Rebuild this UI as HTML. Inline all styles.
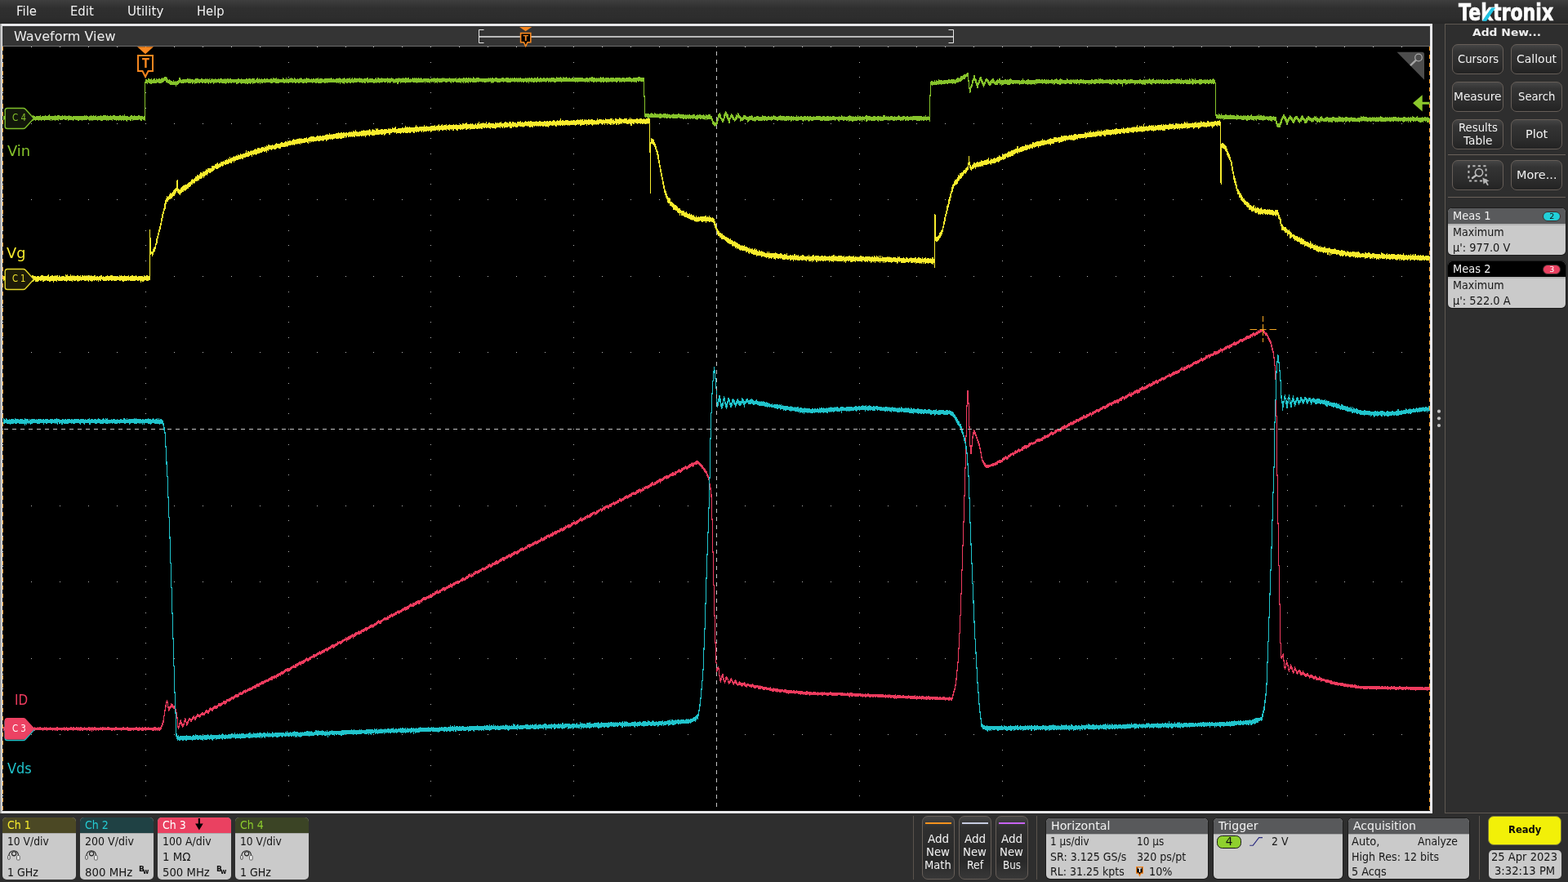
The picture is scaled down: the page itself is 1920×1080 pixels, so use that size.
<!DOCTYPE html>
<html lang="en"><head><meta charset="utf-8"><title>Waveform View</title>
<style>
html,body{margin:0;padding:0;}
body{width:1920px;height:1080px;overflow:hidden;background:#2e2e2e;position:relative;font-family:"DejaVu Sans","Liberation Sans",sans-serif;}
div,span.t,svg{position:absolute;box-sizing:border-box;}
span.t{white-space:nowrap;line-height:1;transform-origin:0 50%;}
.btn{border:1px solid #665e58;border-radius:7px;background:linear-gradient(#454545 0%,#343434 22%,#2b2b2b 72%,#232323 100%);}
.btn2{border:1px solid #665e58;border-radius:7px;background:linear-gradient(#434343 0%,#2f2f2f 18%,#292929 72%,#383838 100%);}
.badge{border-radius:5px;background:#cacaca;overflow:hidden;box-shadow:0 0 0 1px #1c1c1c;}
.hd{left:0;top:0;width:100%;border-bottom:2px solid #b3b3b3;box-sizing:content-box;}
</style></head><body>
<div id="app" style="left:0;top:0;width:1920px;height:1080px;will-change:transform;">

<div style="left:0px;top:0px;width:1920px;height:29px;background:linear-gradient(#3e3e3e 0px,#3a3a3a 3px,#2f2f2f 10px,#2d2d2d 22px,#262626 29px);"></div>
<span class="t" style="left:20.40px;top:7px;font-size:15px;color:#f2f2f2;transform:scaleX(0.9950);">File</span>
<span class="t" style="left:86.30px;top:7px;font-size:15px;color:#f2f2f2;transform:scaleX(0.9888);">Edit</span>
<span class="t" style="left:155.70px;top:7px;font-size:15px;color:#f2f2f2;transform:scaleX(1.0045);">Utility</span>
<span class="t" style="left:241.00px;top:7px;font-size:15px;color:#f2f2f2;transform:scaleX(0.9825);">Help</span>
<div id="logo" style="left:1784px;top:0;width:124px;height:29px;">
<span class="t" style="left:2.10px;top:2px;font-size:28px;color:#ffffff;transform:scaleX(0.7905);font-weight:bold;-webkit-text-stroke:0.7px #fff;">Tektronix</span>
<svg style="left:0;top:0" width="124" height="29"><polygon points="31,25.8 36.2,25.8 47.2,9.4 42.2,9.4" fill="#1fc3e3"/></svg>
</div>
<div style="left:0px;top:29px;width:1754px;height:967px;background:#e7e7e9;"></div>
<div style="left:0px;top:29px;width:2px;height:967px;background:linear-gradient(90deg,#8f8f8f,#cfcfcf);"></div>
<div style="left:3px;top:32px;width:1748px;height:961px;background:#000;"></div>
<div style="left:3px;top:32px;width:1748px;height:25px;background:#343434;border-bottom:1px solid #6d6d6d;"></div>
<span class="t" style="left:16.50px;top:37px;font-size:16px;color:#ececec;transform:scaleX(1.0021);">Waveform View</span>
<svg id="plot" style="left:3px;top:57px" width="1748" height="936" viewBox="3 57 1748 936" shape-rendering="crispEdges">
<rect x="3" y="57" width="1748" height="936" fill="#000"/>
<path d="M4 142h12v-1h1v1h5v-1h4v2h1v-1h3v-1h1v1h6v-1h1v1h2v-1h1v1h2v1h1v-1h5v-1h1v2h1v-1h4v-1h1v1h3v-1h1v-1h1v2h6v-1h1v1h2v-1h3v1h3v-1h1v1h2v-1h1v1h4v-1h1v1h3v1h1v-1h14v-1h1v1h1v-1h1v1h2v1h1v-1h2v-1h1v1h2v-1h1v1h2v-1h1v2h1v-1h4v-1h1v1h2v-1h4v1h1v-1h1v1h3v-1h1v1h2v-1h3v1h5v-1h2v1h2v-1h1v1h1v-2h1v2h4v1h2v-1h1v-1h2v1h2v-1h1v1h4v-1h2v1h4v1h1v-1h1v-42h1v-3h2v1h1v-2h2v1h2v-1h1v2h1v-1h1v-1h2v2h1v-2h1v1h2v-1h2v1h1v-1h1v-1h1v1h1v-1h1v-1h3v1h1v2h1v1h1v-1h1v1h1v1h2v1h1v-2h1v2h1v-1h1v1h1v-1h2v-1h1v-3h2v2h1v1h1v-1h6v-1h2v1h1v-1h1v1h4v1h1v-1h1v-1h4v1h3v-1h2v1h3v-1h1v1h1v-1h1v1h2v-1h1v2h1v-2h1v1h1v-1h1v1h2v-1h1v1h3v-1h1v1h1v-1h3v1h2v-1h1v1h1v-1h1v1h1v-1h2v1h1v-1h2v1h8v-1h2v1h2v-1h1v1h5v-1h2v1h1v-1h3v1h1v-1h4v2h1v-1h1v-1h1v-1h1v2h1v-1h1v1h2v-1h1v1h2v-1h2v1h1v-1h2v1h3v-1h2v1h1v-2h1v1h3v-1h1v2h1v-1h1v1h5v-2h1v1h1v1h2v-2h1v2h1v-1h1v1h1v-1h2v-1h1v1h2v1h1v-2h1v1h1v1h2v-1h1v1h1v-1h2v-1h1v1h1v1h2v-1h1v1h1v-1h1v-1h1v1h3v1h2v-1h1v1h1v-1h2v1h1v-1h3v-1h1v2h1v-1h4v1h2v-1h8v-1h1v1h1v1h1v-1h1v1h2v-1h4v-1h1v1h2v1h1v-1h2v-1h1v1h1v1h1v-1h4v-1h1v2h1v-1h1v-1h1v2h1v-1h1v-1h1v1h5v-1h1v1h3v1h1v-1h4v-1h2v2h1v-1h5v1h2v-1h1v-1h1v2h1v-2h2v1h3v-1h1v1h6v-1h1v1h4v-1h1v1h2v1h2v-1h4v-1h1v1h4v-1h1v1h2v-1h2v1h1v-1h2v2h1v-1h1v1h1v-1h1v-1h1v1h1v-1h1v1h1v-1h1v1h2v-1h1v1h2v-1h1v1h1v1h1v-1h8v1h1v-1h4v-1h1v1h3v-1h1v1h5v-1h1v1h1v-1h1v1h6v-1h1v1h7v-1h1v2h1v-1h2v-1h1v1h4v-1h2v1h1v-1h2v1h1v-1h2v1h1v-1h1v1h2v-2h1v1h1v1h2v-1h4v1h11v-1h1v1h1v-1h1v1h1v-1h2v1h2v-1h3v1h5v-1h3v1h2v-1h4v1h2v-1h1v1h1v-1h1v1h1v-1h2v1h1v-1h1v1h1v-1h1v1h1v-1h2v1h5v-1h1v1h1v-1h1v1h1v-1h2v1h1v-1h2v1h2v-1h2v1h1v-1h1v-1h1v2h2v-1h2v1h2v-1h2v1h2v-1h2v1h1v-1h1v1h1v-1h5v1h2v-2h1v1h4v-1h1v1h1v1h1v-2h1v1h3v-1h1v1h1v1h1v-1h2v1h2v-1h2v1h1v-1h11v1h3v-1h3v1h1v-1h3v-1h2v1h3v1h1v-1h1v1h1v-1h1v1h1v-1h1v-1h1v1h2v-1h1v1h1v1h1v-1h5v1h1v-1h5v1h1v-1h7v1h1v-1h4v1h1v-1h4v-1h1v1h2v1h2v-1h6v-1h3v1h5v22h1v22h5v1h1v-1h1v-1h1v1h2v1h1v-2h1v1h2v1h1v-1h1v1h1v-1h3v1h2v-1h4v1h1v-1h1v1h3v1h1v-1h2v-1h1v1h5v-1h2v1h6v1h1v-1h1v1h1v-1h1v1h1v-1h2v1h3v-1h3v2h1v-1h2v-1h1v1h1v-1h2v1h3v-1h1v1h1v1h1v-2h1v1h2v-1h3v2h2v3h1v3h1v1h1v1h2v-3h1v-3h1v-4h1v-1h1v-1h1v2h1v4h1v1h2v-5h1v-2h1v-2h1v1h1v2h1v1h1v4h2v-3h1v-2h1v1h1v1h1v2h1v2h1v-2h1v-3h1v1h1v-3h1v1h1v2h1v1h1v1h1v1h1v-1h1v-2h3v1h1v1h3v-1h3v-1h1v1h1v2h1v-1h3v-1h3v1h4v-2h1v1h4v1h2v-1h2v1h2v-1h1v1h1v-1h1v-1h1v1h2v1h3v-1h2v-1h1v1h5v1h1v-1h5v1h1v-1h2v1h1v-1h1v1h3v-2h1v2h1v-1h1v1h2v-1h2v1h2v-1h3v1h1v-1h2v1h1v-1h2v1h3v-1h1v1h2v-1h6v1h2v-1h3v1h2v-1h3v1h1v-1h1v1h2v-1h3v1h5v-1h1v1h2v-2h1v1h1v1h1v-1h1v1h4v-1h2v-1h1v1h2v1h1v-1h1v1h2v-1h1v1h2v-2h1v2h1v-1h2v1h2v-1h1v1h2v-1h1v-1h2v1h4v1h3v-1h3v1h2v-1h3v1h1v-1h1v1h2v-2h3v2h1v-1h1v1h1v-1h1v1h2v-1h3v1h2v-1h1v1h3v-1h1v-1h1v1h1v1h3v-1h3v1h2v-1h2v1h3v-1h1v1h1v-1h12v1h2v-1h1v1h1v-2h1v2h2v-1h1v1h1v-27h1v-16h1v-1h2v1h2v-2h1v2h1v-2h1v1h2v-2h1v1h4v1h1v-1h6v-1h2v1h1v-1h5v1h1v-1h1v-1h1v-1h2v1h1v-1h1v-2h3v-1h1v-1h3v-1h1v-1h2v9h1v9h1v-2h1v-2h1v-5h1v-2h1v-4h2v4h1v1h1v4h2v-3h1v-3h1v-1h2v3h1v2h1v2h1v-1h1v-3h1v-1h2v1h1v1h1v2h1v-1h1v-1h1v-1h1v-1h2v2h1v2h1v-1h1v-1h1v-1h1v1h1v-2h2v2h5v-1h2v1h1v-1h1v1h1v-1h2v-1h1v1h1v1h10v1h1v-1h2v-2h1v2h2v1h1v-1h2v-1h2v1h8v-1h6v1h1v-1h2v1h1v-1h2v1h1v-1h1v1h1v-1h1v1h3v-1h2v1h2v-1h2v-1h1v1h1v1h2v-1h1v-1h1v1h2v1h5v-2h1v1h1v1h2v-1h1v1h1v-1h1v1h1v-1h1v1h1v-1h1v1h1v-1h2v1h2v-1h3v1h1v-1h1v1h9v-1h2v1h2v-1h4v1h1v-2h1v1h1v-1h1v1h3v1h3v-1h1v1h1v-1h1v1h1v-1h2v1h2v-1h2v1h4v-1h3v1h1v-1h1v1h2v-1h4v1h2v-1h1v1h1v-1h4v1h8v-1h2v1h3v-1h1v1h1v-1h1v1h1v-1h1v1h1v-1h1v-1h1v1h1v1h1v-1h2v-1h1v2h3v-1h1v1h1v-1h1v1h1v-1h1v1h2v-1h2v1h4v-1h1v1h3v-1h4v1h2v-1h2v-1h1v1h3v1h1v-2h1v2h4v-1h1v1h1v-1h1v1h2v-2h1v1h1v2h1v-3h1v1h2v1h1v-2h1v2h4v-1h4v1h2v-1h1v1h1v-1h1v1h1v-1h1v1h2v-1h2v1h1v-1h1v-1h1v1h1v1h1v3h1v39h2v1h1v-2h1v1h1v1h1v-2h1v2h4v-1h2v1h4v-1h1v1h5v1h2v-2h1v1h2v1h2v-1h1v1h2v-1h1v1h1v-1h1v1h2v-1h2v1h2v-1h1v-1h1v2h6v-1h1v1h1v-2h1v2h1v-1h2v1h2v-1h1v1h1v1h1v-1h1v1h1v-1h1v1h1v-1h3v1h2v-1h1v1h3v5h1v3h3v-2h1v-3h1v-2h1v-2h1v-2h2v2h1v1h1v2h1v1h1v-2h1v-1h1v-2h1v1h1v1h1v1h1v2h1v-2h1v-1h1v-1h3v2h1v1h1v1h1v-2h1v-2h1v-1h1v1h1v2h1v1h1v1h1v-2h2v-2h2v1h1v1h2v1h1v-1h2v-2h1v1h1v-1h1v2h2v1h2v-2h2v-1h1v2h1v1h2v-1h2v-1h2v1h5v-1h3v1h5v-2h1v1h2v1h1v-1h1v1h3v-1h3v1h4v-1h1v1h5v1h2v-1h4v-2h1v1h2v-1h1v1h4v1h3v-1h1v1h2v-1h1v1h1v-1h1v1h2v-1h1v1h1v-1h1v1h1v-1h1v-1h1v1h2v1h3v-1h1v1h1v-1h1v1h2v-1h1v1h1v-1h1v1h1v-1h5v1h2v-1h1v1h5v-1h3v1h3v-1h1v1h2v-1h1v1h1v-2h1v1h2v1h2v-1h1v-1h1v2h5v-1h1v1h2v-1h2v1h1v-1h1v1h2v1h1v4h-1v1h-3v-2h-1v1h-1v-1h-2v2h-1v-1h-1v1h-3v-1h-2v-1h-2v1h-1v-1h-1v1h-2v-1h-2v2h-1v-1h-1v-1h-1v2h-1v-2h-1v1h-1v-1h-1v1h-2v1h-1v-1h-1v-1h-2v1h-1v-1h-1v1h-2v-1h-1v1h-1v-1h-2v1h-2v-1h-1v1h-3v-1h-1v1h-1v-1h-1v1h-8v-1h-1v1h-6v-1h-1v1h-1v-1h-1v1h-3v-1h-1v1h-3v-1h-1v1h-1v-1h-3v1h-1v-1h-1v1h-1v1h-1v-1h-9v-1h-1v1h-1v1h-1v-1h-1v-1h-1v1h-2v1h-1v-2h-1v1h-1v1h-1v-1h-6v1h-1v-1h-1v1h-1v-1h-1v-1h-2v2h-2v-1h-1v1h-1v-1h-1v1h-1v-2h-1v1h-5v-1h-1v1h-1v-1h-1v2h-2v-1h-1v1h-2v-2h-2v-1h-1v2h-2v1h-1v-1h-1v-1h-2v-1h-1v1h-1v2h-1v1h-3v-3h-1v-1h-2v2h-2v2h-1v-1h-1v-1h-1v-2h-1v-1h-1v1h-1v2h-1v2h-2v-1h-1v-2h-1v-1h-1v-1h-1v2h-1v2h-1v3h-2v-3h-1v-2h-1v-2h-1v-1h-1v2h-1v4h-1v2h-1v3h-4v-1h-1v-3h-1v-4h-2v-1h-2v2h-1v-1h-2v-1h-1v1h-1v-1h-2v-1h-1v1h-3v1h-1v-1h-5v-1h-2v2h-1v-1h-1v-1h-1v2h-1v-1h-3v-1h-1v1h-3v1h-2v-1h-1v-1h-1v1h-4v-1h-5v1h-1v-1h-15v1h-1v-2h-1v1h-1v-1h-1v1h-1v-1h-1v1h-1v-1h-3v-3h-1v-40h-1v1h-2v-1h-1v1h-1v-1h-2v1h-2v-1h-2v1h-2v-1h-3v1h-2v1h-1v-1h-1v-1h-3v1h-2v-1h-1v1h-1v1h-1v-1h-1v-1h-1v1h-6v-1h-2v1h-2v-1h-1v1h-2v-1h-2v1h-1v-1h-1v1h-1v-1h-5v1h-2v-1h-2v1h-2v-1h-1v1h-1v-1h-1v1h-2v-1h-1v1h-1v-1h-2v1h-1v-1h-3v1h-2v-1h-3v2h-1v-1h-2v-1h-2v1h-1v-1h-2v2h-2v-1h-1v1h-1v-1h-2v-1h-1v1h-1v-1h-2v1h-1v-1h-1v1h-1v1h-1v-2h-5v1h-1v-1h-2v1h-2v1h-1v-2h-3v4h-1v-3h-3v-1h-2v2h-1v-1h-2v-1h-2v1h-1v-1h-1v2h-1v-1h-3v-1h-7v1h-1v-1h-3v1h-1v-1h-4v1h-3v-1h-2v1h-2v-1h-1v2h-1v-2h-3v1h-2v-1h-1v1h-1v-1h-4v2h-1v-2h-2v1h-2v-1h-1v1h-1v-1h-1v-1h-1v2h-4v-1h-3v1h-3v-1h-1v1h-1v-1h-1v1h-1v1h-2v-1h-3v-1h-2v1h-1v1h-1v-2h-1v1h-1v-1h-4v1h-1v-1h-1v1h-2v-1h-3v1h-1v-1h-6v1h-1v-1h-1v2h-1v-1h-4v1h-1v-1h-3v1h-1v-1h-3v-1h-1v1h-5v1h-1v-1h-1v-1h-1v1h-1v-1h-1v1h-1v-1h-1v1h-3v-1h-1v1h-1v1h-4v-1h-4v1h-2v1h-1v-2h-1v1h-1v-2h-2v2h-4v-1h-1v-1h-3v2h-1v1h-2v-1h-1v-2h-1v-2h-2v3h-1v2h-1v2h-1v-2h-1v-2h-1v-2h-1v-2h-1v3h-1v2h-1v4h-2v-3h-1v-3h-1v-3h-2v3h-1v4h-1v2h-1v5h-1v1h-1v-5h-1v-9h-1v-6h-2v1h-1v2h-3v1h-1v1h-1v1h-3v1h-3v1h-1v1h-1v-1h-2v1h-1v-1h-5v1h-2v-1h-1v1h-5v1h-1v-1h-2v1h-1v-1h-1v1h-6v1h-1v-1h-1v14h-1v31h-1v-2h-3v1h-1v-1h-2v1h-2v-1h-1v1h-1v-1h-1v1h-5v-1h-4v1h-1v-1h-4v1h-2v-1h-1v1h-2v-2h-1v1h-1v1h-1v-1h-1v1h-2v-1h-4v1h-1v-1h-1v1h-3v-1h-3v1h-1v-1h-1v1h-1v-1h-5v1h-5v-1h-1v2h-1v-1h-1v-1h-2v1h-6v-1h-1v1h-1v-1h-1v1h-1v1h-2v-3h-1v2h-1v-1h-2v2h-1v-2h-1v1h-2v-1h-2v1h-5v1h-2v-1h-3v1h-1v-2h-1v1h-2v-1h-2v1h-2v-1h-4v2h-1v-1h-1v-1h-1v-1h-1v1h-1v1h-1v-1h-4v1h-1v-1h-1v1h-7v-1h-1v1h-4v-1h-8v1h-3v-1h-1v1h-1v1h-1v-1h-1v-1h-2v1h-1v-1h-1v1h-1v1h-1v-1h-1v-1h-4v1h-4v-1h-2v1h-1v-1h-1v1h-1v1h-1v-2h-2v1h-1v-1h-1v1h-4v-1h-1v1h-1v-1h-1v1h-1v-1h-3v1h-2v-1h-3v-1h-1v1h-2v1h-1v-1h-4v1h-2v-1h-1v1h-2v-1h-1v1h-6v-1h-2v1h-1v1h-1v-1h-3v-1h-3v1h-1v1h-1v1h-1v-3h-2v-1h-2v1h-1v1h-3v1h-1v-4h-2v-1h-1v2h-1v1h-1v1h-1v1h-1v-2h-2v-2h-1v-1h-1v2h-1v5h-2v-3h-1v-2h-1v-2h-1v-2h-1v3h-1v3h-1v2h-2v-2h-1v-2h-1v-1h-1v-1h-1v4h-1v4h-1v2h-2v1h-1v-1h-1v-1h-1v-1h-1v-4h-1v-2h-5v1h-1v-2h-1v2h-1v-1h-3v-1h-1v1h-2v-1h-2v1h-1v1h-1v-1h-2v-1h-2v1h-1v-1h-2v1h-1v-1h-1v1h-1v-1h-2v1h-2v-1h-1v1h-2v-1h-4v-1h-2v1h-7v-1h-1v1h-3v-1h-1v1h-3v-1h-1v1h-1v-1h-3v1h-3v-1h-12v1h-2v-1h-1v-1h-1v1h-1v-1h-1v-24h-1v-19h-4v-1h-1v1h-2v-1h-1v2h-2v-1h-1v1h-1v-1h-2v1h-1v-1h-8v1h-1v-1h-3v1h-1v-1h-1v1h-1v-2h-1v1h-1v1h-2v-1h-4v1h-1v-1h-3v1h-1v-1h-1v1h-2v-1h-2v1h-2v-1h-1v1h-2v-1h-4v1h-1v-1h-2v1h-2v-1h-3v-1h-1v2h-1v-1h-1v1h-1v-1h-2v1h-1v-1h-8v1h-1v-1h-2v1h-1v-1h-16v1h-1v-1h-6v1h-3v-1h-3v1h-1v-1h-2v1h-1v-2h-1v1h-1v1h-1v-1h-5v1h-1v-1h-1v1h-1v-1h-2v1h-2v-1h-1v1h-3v-1h-1v1h-1v-1h-2v2h-1v-2h-1v1h-2v-1h-2v1h-2v-1h-1v1h-1v-1h-2v1h-1v-1h-1v1h-1v-1h-2v1h-1v-1h-4v1h-6v-1h-3v1h-1v-1h-3v1h-5v-1h-3v1h-1v1h-1v-1h-1v1h-1v-2h-3v1h-1v-1h-1v1h-4v-1h-1v1h-1v-1h-4v1h-1v-1h-1v1h-6v-1h-1v1h-2v-1h-1v2h-1v-1h-3v1h-1v-2h-1v2h-1v-1h-1v-1h-1v2h-1v-1h-6v-1h-2v1h-2v-1h-1v2h-1v-1h-1v-1h-3v1h-3v-1h-3v1h-5v-1h-1v2h-1v-1h-2v1h-1v-2h-1v1h-1v-1h-1v1h-1v-1h-1v2h-1v-1h-4v-1h-1v2h-1v-2h-1v1h-8v1h-1v-1h-5v-1h-1v1h-7v1h-1v-1h-5v1h-1v-2h-1v1h-1v2h-2v-2h-2v1h-1v-1h-1v1h-1v-2h-2v1h-1v1h-1v-1h-2v1h-1v-2h-1v1h-3v-1h-1v1h-4v1h-1v-1h-3v1h-1v-1h-1v1h-2v-1h-6v1h-1v-1h-1v-1h-1v2h-2v-1h-2v1h-1v-1h-4v-1h-1v1h-5v1h-1v-1h-2v1h-2v-1h-2v1h-2v-1h-2v2h-1v-1h-2v-1h-2v2h-1v-2h-1v1h-1v-1h-1v1h-1v-1h-11v1h-1v-1h-1v1h-2v-1h-3v1h-5v-1h-1v1h-2v-1h-3v1h-1v-1h-6v1h-2v-1h-1v1h-3v-1h-3v1h-2v-1h-2v1h-2v-1h-2v1h-1v-1h-4v1h-2v-1h-1v1h-1v-1h-1v1h-2v-1h-5v1h-5v-1h-3v1h-3v-1h-6v1h-1v-1h-2v1h-2v-1h-1v2h-1v-2h-1v1h-2v-1h-2v1h-3v1h-1v-2h-1v1h-1v1h-1v-1h-2v1h-2v-1h-1v1h-1v-1h-4v1h-1v-1h-1v-1h-1v1h-2v1h-2v-2h-2v1h-1v-1h-2v1h-2v-1h-1v1h-2v-1h-1v1h-1v1h-1v-1h-5v-1h-1v1h-2v-1h-3v1h-1v-1h-1v1h-1v1h-1v-2h-2v1h-2v-1h-1v2h-1v-1h-1v-1h-1v1h-3v-1h-1v1h-2v-1h-2v1h-2v-1h-1v1h-3v1h-1v-2h-1v1h-1v1h-1v-2h-1v1h-4v-1h-2v1h-1v-1h-1v1h-5v-1h-1v1h-1v1h-1v1h-2v2h-1v-2h-7v-1h-1v-1h-2v-1h-2v-2h-2v1h-1v1h-2v1h-4v-1h-2v1h-6v1h-2v-1h-2v-1h-1v2h-1v-1h-2v46h-1v-1h-2v-1h-1v2h-2v-1h-1v-1h-1v1h-7v1h-1v-2h-1v2h-2v-1h-3v2h-1v-1h-1v-1h-2v1h-1v-1h-2v1h-1v-1h-2v1h-1v-1h-2v1h-1v-1h-3v-1h-1v2h-1v-1h-4v1h-1v-1h-1v1h-1v-1h-4v1h-3v-1h-3v1h-1v-1h-5v1h-1v-1h-1v1h-1v-1h-1v1h-1v-1h-1v-1h-1v1h-6v1h-1v-1h-3v1h-2v-1h-3v-1h-1v1h-1v1h-1v-1h-5v1h-1v-2h-1v1h-3v-1h-2v1h-4v-1h-1v2h-1v-1h-3v1h-1v-1h-3v1h-1v-2h-1v2h-1v-1h-6v1h-1v-1h-3v1h-1v-1h-2v1h-1v-1h-3v1h-1v-1h-2v1h-1v-1h-5v-1h-2v1h-1v-1h-1v1h-1v1h-1v-1h-6v1h-1v1h-2v-3h-1v1h-4v-1h-2v1h-1v-1h-1v2h-1v-1h-2v-1h-1v1h-1v-1h-1v1h-1z" fill="#86c32b"/>
<path d="M4 338h5v-1h1v1h2v-1h3v1h2v-1h1v1h3v-1h3v-1h1v2h3v-1h2v1h2v1h1v-1h1v-1h2v1h3v-1h2v1h3v1h1v-1h3v1h1v-1h1v-1h3v1h5v-1h1v-1h1v3h1v-1h2v-1h2v1h2v-1h1v1h1v-1h2v2h1v-2h1v1h1v1h1v-1h4v1h1v-3h1v1h1v-1h1v2h3v-2h1v2h1v-1h1v1h1v-1h1v1h3v-1h2v1h2v-1h1v2h1v-2h2v1h1v-1h1v1h1v-1h1v1h1v-1h3v1h1v-1h1v1h3v-1h2v2h1v-1h2v1h1v-1h2v-1h2v2h1v-1h1v1h2v-1h2v-1h1v1h3v-1h3v1h7v1h1v-2h1v1h1v-1h1v1h3v-1h1v1h4v-1h1v2h1v-1h2v-1h2v1h3v-1h1v1h1v1h1v-1h6v1h1v-2h1v1h2v-1h2v1h2v-57h1v10h1v17h2v-3h1v-2h1v-1h1v-4h1v-6h1v-3h1v-4h1v-4h1v-4h1v-4h1v-6h1v-5h1v-3h1v-4h1v-6h1v-4h1v-2h1v-3h1v1h1v-1h1v-2h1v-2h1v1h1v-1h1v-1h1v-2h1v-1h1v-1h1v-1h1v-9h1v-1h1v11h1v1h2v-2h1v-1h1v-1h1v-1h2v-1h3v-1h1v-1h1v-1h2v-1h1v-2h1v-1h1v1h1v-1h1v-1h1v-2h2v-2h2v1h1v-2h1v-2h2v1h1v-2h3v-1h1v-2h1v1h1v-2h5v-3h4v-2h2v-1h1v-1h1v2h1v-1h2v-2h3v-1h1v1h1v-2h2v-1h1v1h1v-2h1v1h1v-3h1v2h1v-1h2v-1h1v-1h1v1h1v-1h1v-1h1v1h1v-2h1v1h2v-2h1v1h2v-1h3v-1h1v-3h1v3h1v-2h2v1h1v-1h1v-1h1v1h1v-1h2v-1h1v-1h1v1h2v-2h3v1h1v-1h1v-1h3v1h1v-2h1v1h1v-2h1v1h1v-2h2v1h3v-1h1v1h2v-1h1v-1h1v-1h1v1h4v-1h1v-1h2v1h2v-1h1v-1h2v1h1v-2h1v1h1v-1h2v1h1v-1h1v-1h1v-1h1v1h3v-1h3v-1h1v1h1v-1h1v1h3v-1h3v-1h1v2h1v-1h1v-1h2v-1h5v1h2v-1h1v-1h2v1h1v-1h2v1h1v-1h4v-1h2v-1h1v1h2v-2h1v2h1v-1h1v1h1v-1h4v-1h3v-1h1v1h2v-1h2v1h1v-1h2v1h1v-1h2v1h1v-1h2v-1h1v1h1v-1h1v1h1v-2h1v1h2v-2h1v2h2v1h1v-1h3v-1h3v-1h1v1h3v-1h1v1h1v-1h1v-1h1v1h1v2h1v-2h1v-1h1v1h2v1h1v-3h1v1h1v-1h1v2h3v-1h3v1h1v-1h4v1h1v-2h1v1h1v-1h1v1h2v-2h1v1h2v-1h1v-1h1v3h2v-1h5v-1h2v1h1v-1h1v-2h1v2h1v-1h1v1h2v-1h1v1h6v-1h1v-2h1v2h2v1h1v-1h6v-2h1v2h2v-1h1v1h4v-1h5v-1h1v2h1v-1h2v-1h1v-1h1v2h2v-1h1v-1h1v2h1v-1h3v-1h1v2h1v-1h2v-1h1v1h4v-1h1v1h2v-1h1v1h4v-1h2v1h1v-2h2v1h1v-1h2v-1h1v2h4v-1h1v1h1v-1h1v1h1v1h1v-1h1v-1h1v2h1v-2h2v-2h1v3h1v-1h3v-1h1v1h3v-2h1v3h1v-1h1v-1h2v1h5v1h1v-2h2v1h1v-1h1v1h1v-1h2v-1h1v2h3v-1h1v-1h2v1h2v1h1v-2h3v2h1v-2h2v1h3v1h1v-2h4v-1h1v2h1v-1h1v1h2v-1h1v-1h1v1h3v-1h1v1h1v-1h2v1h5v-1h1v1h3v-1h2v1h4v-1h2v1h1v-1h2v1h1v-1h3v1h1v-1h1v-1h2v1h1v1h1v-1h1v-1h1v1h2v-1h1v-2h1v3h1v-1h2v1h2v-1h4v1h3v-1h1v1h1v-1h3v1h1v-1h2v-1h1v1h2v-1h1v1h1v-1h2v2h1v-2h1v1h1v-1h1v1h2v-1h2v1h1v-1h3v1h3v1h1v-1h1v-2h1v2h1v-1h4v1h1v-1h1v1h2v-2h1v1h5v-1h3v2h1v-1h1v2h1v-3h2v1h3v-2h1v1h2v1h3v-1h4v2h1v-1h2v-2h1v2h1v-1h1v1h5v-1h2v1h2v-1h3v1h2v-1h1v1h2v-1h5v29h1v-5h1v1h2v1h1v3h1v2h1v3h1v4h1v2h1v4h1v7h1v6h1v5h1v5h1v5h1v5h1v5h1v5h1v2h1v3h1v3h1v2h2v1h1v4h2v1h1v1h1v1h1v1h2v1h1v1h1v2h3v2h1v1h4v2h2v-1h1v2h1v1h2v-1h1v2h1v-1h1v1h1v1h1v-1h1v2h1v1h1v-2h1v2h2v-1h1v1h1v-1h6v-1h2v2h1v-1h1v1h1v-2h1v2h2v1h1v-1h1v1h1v1h1v3h1v3h1v4h1v2h1v2h1v1h1v2h2v1h2v2h2v1h1v1h2v1h2v1h1v1h1v-1h1v2h2v1h1v1h1v-1h1v1h1v1h2v1h1v1h2v1h1v1h1v-1h1v1h2v-1h1v2h3v1h1v1h1v-1h1v2h1v-1h1v1h1v-1h1v2h1v-1h1v-1h1v2h1v-1h1v2h1v1h1v-2h1v1h1v1h1v-1h1v1h2v1h2v1h2v-2h1v2h1v-2h1v2h7v-1h1v1h2v1h3v-1h2v1h1v1h2v-1h2v1h1v-2h1v3h3v-1h2v1h1v-1h1v1h1v-2h2v2h1v-1h1v1h1v-1h1v2h2v-1h2v-1h2v1h1v1h3v-1h1v1h1v-2h1v2h3v-1h1v-1h2v2h1v-1h5v1h2v-1h3v1h1v-1h2v1h4v-1h1v1h2v-1h2v-1h2v2h1v-1h1v1h2v-1h5v1h2v-1h1v2h1v-1h4v-1h2v1h4v-1h1v2h1v-1h2v1h1v-1h1v1h1v-1h1v-1h2v1h3v1h1v-1h7v1h1v-1h2v1h1v-2h1v1h1v1h1v-2h1v1h1v1h1v-2h1v3h1v-3h1v3h1v-2h1v1h5v-1h1v1h1v-1h1v1h3v1h1v-1h4v1h2v-2h1v1h1v-1h1v2h4v-1h1v1h1v1h1v-2h2v1h1v1h1v-1h2v-1h1v1h4v-1h2v2h1v-1h1v-1h2v1h2v1h1v-2h1v2h1v-1h2v-1h1v2h1v-1h3v1h1v-1h1v1h1v-2h2v2h1v-55h1v1h1v27h2v-1h1v-1h1v-3h1v-1h1v-2h1v-1h1v-4h1v-6h1v-5h1v-4h1v-4h1v-6h1v-2h1v-6h1v-3h1v-4h1v-3h1v-5h1v-3h1v-1h1v-3h1v-2h2v-1h1v-2h1v-3h1v1h1v-3h2v-1h2v-2h1v-1h2v-2h1v-1h1v-1h1v-5h1v-8h1v7h1v4h1v2h1v-2h1v-1h1v-2h2v1h1v-1h1v-1h2v1h1v-1h2v-2h1v1h3v-1h3v-1h2v-2h1v4h1v-1h1v-2h1v1h2v-1h1v-1h1v1h2v-1h1v-1h2v-2h1v1h1v1h2v-3h3v-1h3v-1h1v-1h1v-1h1v1h1v-1h1v-1h3v-1h2v-1h2v-3h2v3h1v-1h1v-1h2v-1h4v-2h2v1h1v-1h1v1h1v-1h1v-1h1v1h1v-1h1v-2h2v1h1v-1h2v-1h5v-1h2v-2h1v2h1v-1h1v1h3v-1h2v-1h2v-1h1v1h3v-2h4v1h1v-1h4v-2h2v1h1v-1h5v1h1v-1h1v-1h1v1h1v-1h2v1h1v-1h1v-1h3v1h2v-1h8v-2h2v1h1v-1h1v1h1v-2h1v1h1v-2h1v2h2v-1h2v1h1v-1h3v-2h1v2h1v-1h1v1h1v-2h1v2h1v-1h2v-1h1v1h1v-2h1v1h1v-1h1v1h5v-1h1v1h1v-1h2v-1h2v1h5v-1h1v1h1v-2h1v1h1v1h1v-1h2v-1h2v1h1v-1h1v1h1v-1h2v-1h1v1h1v-1h1v1h1v-1h1v-2h1v3h2v-2h1v1h1v-1h1v1h2v-3h1v3h2v-1h1v1h2v-1h1v-1h1v1h2v-1h1v1h1v-1h1v2h1v-2h1v1h2v-1h5v-1h1v2h1v-2h1v1h2v-1h1v1h3v-1h1v-1h1v1h3v-1h1v2h2v-2h3v1h1v-1h1v1h2v-1h2v1h1v-1h1v-2h1v1h1v1h1v-2h1v2h6v-1h1v1h1v-1h2v-1h1v2h1v-1h4v-2h1v1h1v1h1v-1h2v1h3v-2h2v1h1v1h1v-1h5v-1h2v1h1v-1h3v-1h1v2h1v27h1v-1h2v1h1v1h1v1h1v1h1v3h1v3h1v2h1v2h1v3h1v4h1v2h1v6h1v6h1v5h1v3h1v4h1v4h1v5h1v1h1v2h1v2h1v1h1v2h1v2h1v2h2v2h1v1h1v1h2v1h1v1h1v2h2v1h1v1h1v-1h1v-1h1v4h1v-2h1v2h1v-1h2v1h1v1h1v-1h1v-1h1v2h1v1h1v-1h3v1h2v-1h1v1h1v-1h1v1h4v1h1v1h1v-2h4v3h1v3h1v3h1v2h1v6h1v1h1v2h1v1h3v2h1v1h1v1h1v-1h1v2h1v1h1v1h1v2h3v1h1v1h3v1h1v1h1v-1h1v2h1v-1h1v1h1v1h2v2h2v1h3v1h1v1h1v-3h1v2h1v2h1v-1h1v2h2v-1h1v2h1v-1h1v1h1v1h2v-1h1v2h1v-1h1v1h2v-1h2v2h4v-1h1v1h1v1h5v-1h1v1h1v1h4v1h2v-1h2v1h3v1h1v1h1v-2h1v1h2v1h1v-1h1v1h1v-1h4v1h1v-1h1v1h1v-1h2v1h1v1h1v1h1v-1h3v1h1v-2h2v1h2v-1h2v1h1v1h2v-1h3v1h7v1h1v-3h1v1h2v1h2v1h1v-1h1v-1h1v2h1v-1h2v1h1v-1h5v1h3v-1h2v1h1v-1h1v1h3v-2h1v2h1v1h1v-1h2v1h1v-1h2v1h1v-2h1v2h1v-1h1v-1h1v2h1v-2h2v2h2v-1h1v1h2v-1h1v1h2v-1h1v1h1v1h1v-1h5v1h1v5h-5v-1h-1v1h-2v-1h-1v1h-5v-1h-1v1h-1v-1h-2v1h-2v-1h-3v1h-2v-2h-1v1h-1v1h-1v-1h-3v1h-2v-1h-2v1h-1v-2h-1v2h-1v-2h-1v1h-1v1h-1v-1h-2v-1h-2v1h-1v-1h-2v1h-2v-1h-3v1h-1v-2h-1v1h-4v-1h-1v1h-1v-1h-1v2h-1v-1h-2v1h-1v-2h-2v1h-1v-2h-1v2h-1v-1h-1v1h-2v-2h-2v1h-3v1h-1v-2h-5v1h-1v-1h-2v1h-1v-1h-2v1h-1v-2h-1v1h-1v-1h-3v1h-2v-1h-1v-1h-2v1h-2v-2h-1v1h-1v1h-2v-1h-1v1h-1v-1h-1v-1h-1v-1h-1v1h-2v-1h-5v1h-1v-2h-1v3h-1v-4h-1v3h-2v-3h-1v1h-1v-1h-2v1h-1v-1h-1v-1h-1v1h-1v-1h-2v1h-1v-1h-2v-1h-1v-1h-3v-2h-3v1h-1v-2h-2v-1h-2v-1h-2v1h-1v-3h-1v1h-1v-1h-3v-2h-1v-1h-3v-1h-1v-1h-1v1h-1v-2h-1v-1h-1v-2h-1v1h-1v1h-2v-5h-2v2h-1v-4h-3v-2h-1v-1h-3v-5h-1v-3h-1v-5h-1v-1h-1v-4h-1v-1h-1v2h-1v-1h-1v-1h-1v1h-2v-1h-4v-1h-1v1h-2v-1h-1v1h-1v-1h-1v-1h-1v2h-1v-1h-2v1h-1v-1h-1v1h-1v-1h-1v-2h-1v1h-2v-1h-1v-2h-1v1h-3v-2h-3v-3h-2v-1h-1v-2h-2v-1h-1v-2h-1v-1h-1v-1h-1v-1h-1v-3h-2v-4h-2v-4h-1v-3h-1v-4h-1v-3h-1v-4h-1v-7h-1v-4h-1v-6h-1v-5h-1v-2h-1v-2h-1v-2h-1v-2h-1v-4h-1v-1h-1v-2h-1v-1h-2v-1h-1v45h-1v-2h-1v-70h-2v-1h-1v2h-1v-1h-1v-1h-1v1h-1v1h-2v2h-1v-2h-1v-1h-1v1h-4v1h-2v-1h-1v1h-1v-1h-3v1h-2v1h-1v1h-1v-2h-4v1h-1v1h-1v-2h-4v1h-3v1h-1v-2h-1v1h-4v1h-1v-1h-2v2h-1v-2h-1v1h-2v-1h-1v1h-2v1h-1v-2h-1v1h-4v1h-2v-1h-3v2h-4v-1h-2v1h-1v-1h-1v1h-1v-1h-2v1h-3v1h-1v-1h-3v-1h-1v1h-2v1h-1v-1h-3v1h-3v1h-1v-1h-5v1h-2v-1h-2v1h-1v1h-1v-1h-3v-1h-1v2h-4v-1h-1v1h-1v1h-1v-1h-2v-1h-1v2h-3v-1h-1v1h-2v1h-2v-1h-1v1h-1v-1h-1v1h-2v1h-1v-1h-5v2h-2v-1h-1v-1h-2v2h-3v-1h-2v1h-2v1h-1v-1h-1v1h-1v-1h-1v1h-7v1h-1v1h-1v-2h-1v1h-5v1h-1v-1h-2v2h-1v-1h-1v1h-2v1h-3v-1h-1v1h-1v-1h-3v1h-1v-1h-1v1h-1v1h-1v-1h-1v1h-2v1h-3v1h-2v-2h-1v1h-4v2h-4v2h-1v-1h-1v-1h-1v1h-1v-1h-1v1h-3v1h-4v1h-3v2h-1v-2h-2v1h-2v1h-1v-1h-1v2h-2v-1h-1v1h-1v1h-1v-1h-1v1h-1v1h-4v1h-2v1h-3v1h-1v-1h-1v2h-2v-1h-1v1h-1v1h-2v2h-3v1h-3v1h-2v-1h-1v2h-1v1h-2v1h-1v-1h-1v1h-2v1h-1v1h-1v1h-1v-1h-2v1h-1v1h-5v2h-1v-1h-1v-1h-1v1h-2v1h-5v2h-1v-1h-1v1h-4v1h-1v-1h-1v1h-1v2h-1v-2h-1v1h-1v1h-2v2h-1v-1h-1v-2h-1v-4h-1v6h-1v1h-1v2h-1v2h-1v-1h-1v1h-1v2h-1v1h-1v2h-1v1h-2v2h-1v1h-1v3h-1v1h-2v1h-1v1h-1v3h-1v4h-1v2h-1v5h-1v4h-1v4h-1v4h-1v4h-1v4h-1v3h-1v6h-1v4h-1v4h-1v5h-1v3h-1v2h-1v2h-1v1h-1v2h-1v1h-1v1h-2v-1h-1v33h-1v-6h-1v2h-1v-1h-2v-1h-3v1h-1v-1h-2v1h-2v-2h-1v2h-1v-2h-1v2h-1v-1h-1v1h-1v-1h-4v1h-1v-2h-1v1h-1v-1h-1v1h-3v-2h-1v1h-1v1h-1v-1h-3v1h-6v-2h-1v1h-1v-1h-1v2h-1v1h-1v-2h-3v-1h-1v1h-2v1h-1v-1h-4v-1h-1v1h-2v1h-1v-2h-1v2h-1v-2h-3v2h-1v-2h-1v1h-1v-1h-3v2h-1v-2h-1v1h-1v-1h-1v1h-1v1h-1v-2h-2v-1h-1v2h-1v-1h-2v1h-1v-1h-1v-1h-2v2h-1v-1h-6v-1h-1v2h-1v-1h-3v1h-3v-2h-1v1h-2v-1h-1v1h-1v2h-1v-2h-1v1h-1v-2h-1v1h-8v-1h-1v1h-1v-1h-1v2h-1v-1h-3v-1h-1v2h-1v-2h-4v1h-1v-1h-1v1h-2v-1h-2v1h-1v-1h-1v1h-1v-1h-1v2h-2v-2h-1v-1h-1v2h-1v-1h-1v2h-1v-2h-1v1h-3v-2h-2v2h-1v-1h-2v-1h-1v1h-3v-1h-1v1h-4v-1h-1v1h-1v-1h-2v2h-1v-2h-2v1h-2v-2h-1v1h-3v-1h-1v1h-4v-1h-1v-1h-1v1h-1v-1h-1v1h-2v-1h-2v2h-1v-1h-2v-2h-1v1h-1v1h-1v-1h-2v1h-1v-2h-2v1h-1v-1h-2v-1h-3v1h-1v-2h-5v1h-1v-2h-4v-1h-2v-1h-1v-1h-1v2h-1v-1h-1v-2h-1v1h-2v-2h-5v-1h-1v1h-1v-1h-1v-1h-1v-1h-1v1h-1v-2h-1v1h-1v-2h-1v-1h-1v1h-1v-1h-1v-2h-3v-1h-2v-1h-1v-1h-1v-1h-1v-1h-1v-1h-4v-2h-2v-2h-2v-2h-1v-3h-1v-3h-1v-2h-1v-3h-1v-3h-1v-1h-2v-1h-1v1h-2v-1h-3v2h-1v-2h-3v1h-2v-1h-1v-1h-1v1h-2v1h-1v-1h-1v1h-1v-1h-2v-1h-1v-1h-1v1h-1v-1h-2v-1h-2v-1h-2v-1h-3v-1h-1v-1h-3v-3h-1v3h-1v-3h-2v-1h-1v-2h-2v-1h-3v-3h-1v-1h-1v-1h-2v-3h-2v-1h-1v-4h-1v-2h-1v-3h-1v-3h-1v-5h-1v-5h-1v-6h-1v-4h-1v-5h-1v-6h-1v-5h-1v-5h-1v-5h-1v-4h-1v-3h-1v-3h-1v-2h-1v-1h-1v-1h-2v61h-1v-50h-1v-36h-1v1h-1v-1h-1v1h-3v-1h-1v1h-2v-1h-1v1h-1v-1h-3v1h-1v-1h-2v-1h-1v2h-2v-1h-1v3h-2v-2h-1v-1h-1v1h-3v-1h-4v-1h-1v2h-1v-1h-1v1h-2v1h-1v-2h-1v2h-2v-2h-1v1h-2v1h-1v-2h-1v2h-2v-1h-2v-1h-1v2h-1v-2h-2v2h-1v-2h-1v1h-1v1h-1v-1h-1v-1h-2v1h-1v1h-1v-1h-1v1h-1v-1h-1v1h-1v-1h-1v1h-1v1h-1v-1h-1v-1h-2v1h-2v-1h-1v2h-1v-2h-2v1h-4v1h-2v-2h-1v1h-1v-1h-1v1h-2v1h-1v-1h-6v1h-1v-1h-1v1h-1v-1h-3v1h-1v-1h-1v1h-2v-1h-1v1h-2v-1h-1v1h-1v-1h-1v2h-2v-1h-1v-1h-1v1h-3v-1h-1v1h-2v2h-1v-1h-4v-1h-1v1h-2v-1h-2v1h-1v-1h-1v1h-1v-1h-1v1h-1v-1h-2v1h-1v-1h-1v2h-2v-1h-1v1h-2v-1h-1v-1h-1v1h-1v-1h-2v1h-2v1h-1v-1h-4v-1h-1v1h-1v1h-3v-1h-2v1h-1v-1h-1v2h-3v-2h-2v1h-4v1h-1v-2h-1v2h-1v-1h-1v-1h-1v2h-1v-1h-4v1h-1v1h-1v-1h-4v-1h-1v2h-1v-1h-2v-1h-1v1h-2v-1h-1v1h-2v-1h-1v2h-2v-1h-1v1h-1v-1h-1v1h-3v-1h-1v1h-6v1h-1v-2h-1v1h-2v1h-2v-2h-1v1h-2v1h-1v-1h-1v1h-2v-1h-2v2h-2v-1h-1v-1h-2v2h-2v-2h-1v1h-1v-1h-1v2h-1v-1h-2v-1h-1v2h-1v-1h-3v1h-2v-1h-2v1h-1v1h-1v-2h-1v1h-1v-1h-1v1h-5v1h-1v1h-1v-2h-2v1h-1v-1h-1v1h-4v1h-1v-2h-1v2h-1v-1h-1v-1h-1v1h-1v1h-1v-1h-1v1h-2v-1h-1v2h-2v-1h-1v-1h-1v1h-1v1h-2v-1h-1v1h-4v-1h-1v1h-2v-1h-1v1h-1v1h-1v-1h-4v1h-1v-2h-1v1h-1v-1h-3v1h-2v2h-2v-2h-3v1h-1v1h-1v1h-1v-2h-1v1h-3v-1h-1v1h-6v1h-4v-1h-2v2h-1v-1h-1v-1h-1v1h-2v2h-1v-2h-1v1h-1v-1h-1v1h-2v-1h-1v1h-5v-1h-1v2h-2v-1h-1v1h-1v-1h-1v1h-1v-1h-1v1h-2v-2h-1v2h-1v1h-1v-2h-1v2h-3v1h-3v-1h-1v1h-4v-1h-1v1h-2v1h-2v-1h-1v1h-1v-1h-1v1h-2v1h-1v1h-1v-2h-2v1h-1v1h-1v-1h-3v1h-3v-1h-1v1h-4v1h-1v-1h-1v1h-1v-1h-1v2h-1v-2h-1v3h-1v-1h-1v-1h-2v1h-4v1h-1v-1h-1v2h-1v-1h-3v1h-1v-1h-1v1h-1v1h-1v-1h-1v1h-1v-1h-1v1h-4v1h-1v1h-1v-1h-1v1h-6v2h-3v-1h-2v1h-1v1h-3v-1h-1v1h-1v1h-1v-1h-3v2h-1v-1h-1v3h-1v-2h-1v1h-2v-1h-1v1h-1v1h-3v1h-3v1h-1v1h-1v-1h-2v1h-1v-1h-1v3h-1v-2h-2v1h-1v1h-4v1h-3v2h-2v-1h-1v1h-3v1h-3v1h-2v2h-1v-2h-1v1h-1v2h-2v-1h-1v1h-1v1h-3v1h-2v-1h-1v2h-1v1h-1v-1h-1v1h-1v1h-2v1h-1v1h-3v-1h-1v2h-1v1h-1v1h-2v1h-1v1h-2v-1h-1v2h-1v2h-1v-1h-1v1h-1v1h-1v2h-1v-2h-1v2h-1v1h-3v2h-2v1h-3v2h-1v1h-1v-1h-1v2h-2v2h-1v1h-2v2h-2v1h-1v1h-1v1h-1v-1h-1v2h-2v1h-1v1h-1v2h-1v-1h-1v-1h-1v-1h-1v-2h-1v2h-1v2h-1v2h-2v1h-1v2h-2v1h-2v1h-1v2h-2v3h-1v6h-1v2h-1v4h-1v5h-1v4h-1v5h-1v5h-1v3h-1v4h-1v4h-1v6h-1v2h-1v5h-1v3h-1v1h-1v3h-1v2h-1v-3h-1v1h-1v31h-2v1h-3v-1h-2v1h-1v1h-2v-1h-1v2h-1v-2h-1v-1h-1v1h-2v-1h-2v1h-7v-1h-1v1h-1v-1h-1v1h-4v1h-2v-1h-1v-1h-1v1h-2v-1h-3v1h-4v-1h-1v1h-2v-1h-2v1h-2v-1h-1v1h-5v-1h-1v-1h-1v2h-2v-1h-1v2h-1v-2h-1v1h-1v-1h-2v1h-1v-1h-1v1h-1v1h-1v-1h-2v-1h-1v2h-1v-1h-1v-1h-1v1h-3v-1h-3v1h-1v-1h-1v1h-2v1h-1v-1h-1v-1h-1v1h-3v-1h-1v2h-1v-1h-4v-1h-1v1h-1v1h-1v-1h-3v-1h-1v1h-6v-1h-1v2h-1v-1h-3v2h-1v-2h-3v1h-2v-1h-3v-1h-1v1h-2v1h-2v-2h-1v1h-2v-1h-1v1h-1v1h-4v-2h-1v1h-1v1h-2v-1h-1v-1h-2v1h-1v1h-1v-1h-4v-1h-1v1h-2v1h-1v-1h-3v-1h-1v1h-2v1h-1v-1h-1v-1h-1v1h-3v-1h-2v2h-1v-1h-1v-1h-2v1h-2v-1h-1v1h-1z" fill="#f8ec2d"/>
<path d="M4 890h2v1h2v-1h1v1h6v-1h1v1h5v-1h1v1h5v-1h1v1h4v-1h1v1h1v-1h5v1h1v-1h1v1h1v-1h1v1h3v-1h1v1h1v-1h2v1h4v-1h1v1h1v-1h1v1h4v-1h1v1h7v-1h2v1h7v-1h1v1h2v-1h1v1h4v-1h2v1h1v-1h2v1h2v-1h2v1h1v-1h1v1h1v-1h2v1h3v-1h1v1h4v-1h2v1h1v-1h1v1h1v-1h1v1h1v-1h2v1h6v-1h1v1h1v-1h2v1h1v-1h1v1h2v-1h3v1h7v-1h2v1h7v-1h2v1h3v-1h2v1h9v-1h2v1h2v-1h1v1h3v-1h1v1h2v-1h2v1h2v-1h1v1h6v-1h3v1h3v-1h1v1h1v-1h1v-2h1v-3h1v-3h1v-6h1v-7h1v-6h1v-4h1v-2h1v2h1v6h2v-1h1v-3h1v1h2v2h2v1h1v3h1v4h1v6h1v11h1v-4h1v-3h1v-1h1v3h1v2h2v-4h1v-3h1v1h1v4h1v-1h1v-2h1v-2h2v1h2v-2h1v-1h1v-1h1v2h1v-1h1v-1h1v-2h2v1h2v-1h1v-1h1v-1h2v1h1v-1h1v-2h1v-1h2v1h1v-1h1v-2h1v-1h1v1h2v-1h1v-1h1v-1h4v-1h1v-2h4v-1h2v-2h4v-2h3v-1h2v-1h1v-1h3v-1h1v-1h1v-1h4v-2h2v-1h1v1h1v-1h1v-1h1v-1h2v-1h1v1h1v-1h1v-1h2v-1h3v-1h1v-1h2v-1h2v-1h1v-1h3v-1h2v-1h1v-1h3v-1h2v-1h3v-1h1v-1h2v-1h1v-1h3v-1h3v-1h1v-1h2v-1h2v-1h1v-1h3v-1h1v-1h1v-1h2v-1h4v-1h1v-1h2v-1h1v-1h1v1h1v-2h2v-1h2v-1h1v-1h3v-1h2v-1h2v-1h1v-1h1v-1h1v1h2v-1h1v-1h2v-1h2v-2h4v-1h1v-1h2v-1h1v-1h1v1h1v-1h1v-1h2v-1h2v-1h1v-1h1v1h1v-1h1v-1h2v-1h1v-1h1v-1h4v-1h2v-1h1v-2h1v1h1v-1h3v-1h1v-1h2v-1h2v-2h1v1h1v-1h1v-1h2v-1h2v-1h1v-1h1v1h1v-1h1v-1h1v-1h3v-1h1v-1h1v1h1v-1h1v-1h2v-1h2v-1h1v-1h4v-1h1v-1h1v-1h2v-1h1v1h1v-1h1v-1h2v-1h1v-1h1v-1h1v-1h1v1h2v-1h2v-1h1v-1h1v-1h4v-2h1v1h1v-2h2v-1h1v-1h1v1h1v-1h2v-1h1v-1h2v-1h1v-1h1v1h1v-1h2v-1h1v-1h2v-1h1v-1h3v-1h2v-1h1v-1h1v-1h2v1h1v-2h3v-1h1v-1h2v-1h4v-1h1v-1h1v-1h1v-1h4v-1h2v-1h2v-1h1v-1h1v1h1v-2h3v-2h2v-1h1v-1h1v2h1v-1h1v-1h2v-1h1v-1h1v-1h4v-1h2v-1h1v-1h2v-2h1v1h2v-1h1v-1h2v-1h2v-1h4v-1h1v-1h1v-1h1v-1h2v1h1v-1h1v-1h1v-1h2v-2h2v-1h1v2h1v-2h1v1h1v-2h2v-2h4v-1h2v-1h2v-1h1v-1h4v-1h1v-1h2v-2h2v-1h1v1h2v-2h3v-1h1v-1h1v-1h2v1h1v-1h1v-1h1v-1h2v-1h1v-1h4v-1h1v-1h2v-1h1v-1h1v1h1v-1h1v-1h2v-1h1v-1h4v-1h2v-1h1v-1h1v-1h2v-1h1v1h2v-1h1v-1h2v-2h2v-1h4v-1h1v-1h2v-1h1v-1h1v1h1v-1h2v-1h2v-1h1v-2h2v1h1v-1h1v-1h2v-1h1v-1h2v-1h1v1h1v-1h1v-1h2v-2h1v1h1v-1h1v-1h3v-1h3v-2h2v-1h1v1h1v-1h1v-1h2v-2h1v1h1v-1h1v-1h4v-2h2v-1h2v-1h1v1h1v-1h1v-1h2v-1h1v-1h1v-1h1v-1h1v2h1v-1h2v-1h1v-1h2v-1h1v-1h1v1h1v-1h1v-1h1v-1h2v-1h2v-1h1v1h2v-2h2v-1h2v-1h1v-1h1v1h1v-1h1v-1h1v-1h2v-1h2v-1h1v1h1v-1h1v-1h2v-1h2v-1h1v-1h1v1h1v-1h2v-1h1v-1h2v-2h2v1h1v-1h2v-1h1v-1h1v-1h2v-1h1v1h1v-1h1v-1h2v-1h1v-1h2v-1h1v1h1v-1h2v-2h2v-1h2v-1h1v1h2v-2h1v1h1v-2h2v-1h3v-1h2v-1h1v-1h1v-1h1v-1h2v2h1v-2h2v-1h1v-1h2v-1h1v-1h4v-1h1v-1h1v-1h2v-1h4v-1h1v-1h2v-1h1v-1h2v1h1v-2h3v-1h1v-1h1v-1h1v1h2v-2h2v-1h2v-1h1v-1h1v1h2v-1h1v-1h1v-1h2v-1h1v-1h1v1h1v-1h2v-1h1v-1h3v1h1v1h1v1h1v1h1v1h1v1h1v2h1v1h1v1h1v2h1v1h1v3h1v2h1v4h1v6h1v5h1v8h1v30h1v40h1v41h1v37h1v33h1v25h1v6h1v-1h1v2h1v9h1v3h1v-3h1v-2h2v5h1v3h1v-4h1v-1h1v1h1v2h1v3h1v-1h1v-2h1v-1h1v2h1v2h1v1h1v-2h1v-1h1v1h1v2h1v2h1v-2h1v-1h1v1h1v1h4v-1h1v1h1v2h1v-1h3v1h4v-1h1v1h1v1h6v1h1v-1h1v1h3v1h5v1h4v-1h1v2h3v-1h1v1h5v1h6v1h1v-1h3v1h7v1h1v-1h2v1h2v-1h1v1h7v1h4v-1h2v1h5v1h1v-1h4v1h2v-1h1v1h3v-1h1v1h1v-1h1v1h1v-1h1v1h6v-1h2v1h15v1h1v-1h1v1h2v-1h2v1h1v-1h4v1h11v1h1v-1h1v1h2v-1h1v1h2v-1h2v1h18v1h2v-1h1v1h2v-1h1v1h1v-1h1v1h6v-1h1v2h1v-1h5v1h2v-1h2v1h5v-1h1v1h7v-1h1v2h1v-1h2v1h1v-1h2v1h1v-1h3v1h3v-1h1v1h1v-1h2v1h11v1h1v-1h2v1h2v-1h3v1h5v-1h1v1h3v-4h1v-4h1v-3h1v-5h1v-8h1v-10h1v-10h1v-17h1v-18h1v-22h1v-27h1v-29h1v-30h1v-29h1v-32h1v-34h1v-39h1v-37h1v-18h2v15h1v29h1v23h2v-11h1v-5h1v-3h1v1h1v2h1v3h1v3h1v3h1v2h1v3h1v5h1v5h1v6h1v4h1v1h1v2h1v1h1v2h6v-1h2v-1h3v-1h2v-1h1v-1h2v-1h4v-2h1v-1h2v-1h1v-1h1v1h2v-2h2v-1h1v-1h2v-1h3v-2h1v-1h1v1h1v-1h1v-1h1v-1h1v1h2v-1h1v-2h2v-1h1v-1h5v-2h1v-1h3v-1h1v1h1v-1h2v-1h1v-2h2v-1h5v-1h1v-1h2v-2h4v-1h2v-1h1v-1h1v-1h1v-1h1v1h3v-2h1v-1h2v-1h4v-1h1v-1h1v-1h2v-1h1v-1h1v1h2v-1h1v-1h1v-1h2v-1h1v-1h1v1h1v-1h1v-1h3v-2h4v-1h1v-1h2v-1h2v-2h2v1h2v-2h3v-1h1v-1h2v1h1v-2h2v-1h2v-1h1v-1h4v-1h1v-1h2v-1h1v-1h4v-1h1v-1h1v-1h2v-1h3v-1h2v-1h1v-1h3v-1h3v-1h1v-1h2v-1h1v-1h2v1h1v-1h1v-1h2v-1h1v-1h2v-2h1v2h1v-2h1v1h1v-1h1v-1h1v-1h2v-1h4v-2h2v-1h1v-1h2v1h1v-1h2v-1h1v-1h2v-1h1v-1h1v1h1v-1h2v-2h3v-1h1v-1h2v1h1v-1h1v-1h2v-1h1v-1h4v-1h1v-1h2v-1h2v-2h1v1h2v-1h1v-1h1v-1h3v-1h3v-1h2v-1h1v-1h1v-1h1v-1h1v2h1v-2h3v-1h1v-1h2v-1h1v1h1v-1h2v-1h1v-1h1v-1h2v-1h3v-1h2v-1h2v-2h2v1h1v-1h2v-1h1v-2h3v-1h3v-1h3v-1h1v-2h5v-1h1v-1h2v-2h1v1h3v-1h1v-1h1v-1h2v-1h3v-1h2v-1h2v-1h1v-1h1v-1h1v1h2v-1h2v-1h1v-1h1v-1h4v-1h2v-1h1v-1h1v-1h4v-1h1v-1h2v-1h1v-1h2v1h1v-1h1v-1h2v-2h1v1h1v-1h2v-1h2v-1h1v2h1v1h1v2h2v1h1v2h1v2h1v2h1v2h1v2h1v4h1v4h1v4h1v7h1v10h1v16h1v46h1v72h1v59h1v52h1v47h1v48h1v16h1v-2h1v-1h1v8h1v8h1v-4h1v-4h1v3h1v3h1v5h1v-3h1v-3h1v2h1v2h1v4h1v-2h1v-3h1v2h1v2h1v2h1v-1h1v-1h2v1h1v2h2v-2h1v2h1v1h1v1h2v-1h2v2h1v1h1v-1h3v1h1v1h2v-1h1v1h1v1h1v1h2v-2h1v1h1v1h2v1h3v1h5v1h4v1h1v1h1v-1h1v1h4v1h7v1h4v1h1v-1h1v1h6v1h1v-1h2v1h2v1h1v-1h1v1h26v1h1v-1h3v1h1v-1h2v1h1v-1h2v1h3v-1h2v1h1v-1h2v1h5v-1h2v1h7v-1h1v1h20v1h1v-1h7v4h-3v1h-1v-1h-13v1h-1v-1h-7v-1h-1v1h-1v-1h-2v1h-2v-1h-1v1h-3v-1h-3v1h-1v-1h-1v1h-3v-1h-5v1h-1v-1h-2v1h-1v-1h-13v1h-1v-1h-9v-1h-1v1h-6v-1h-2v1h-1v-1h-7v-1h-6v-1h-2v1h-1v-1h-5v-1h-4v-1h-2v1h-1v-1h-4v-1h-5v-1h-1v-1h-5v-1h-1v-1h-4v1h-1v-2h-6v-2h-1v1h-2v-1h-1v-1h-3v1h-1v-2h-1v-1h-2v1h-2v-1h-1v-1h-1v-1h-1v1h-3v-2h-1v-2h-1v2h-1v1h-1v-1h-1v-3h-1v-1h-1v3h-1v1h-1v-2h-1v-3h-1v-1h-1v1h-1v3h-1v-2h-1v-5h-1v-2h-1v4h-1v2h-1v-2h-1v-8h-1v-5h-1v2h-1v-1h-1v-18h-1v-47h-1v-48h-1v-51h-1v-59h-1v-73h-1v-45h-1v-17h-1v-9h-1v-7h-1v-3h-1v-4h-1v-4h-1v-2h-1v-2h-1v-2h-1v-3h-1v-1h-2v-2h-1v-1h-1v-1h-1v-1h-1v1h-2v1h-2v1h-1v1h-2v1h-1v1h-1v-1h-2v2h-1v-1h-1v2h-2v1h-3v1h-2v1h-2v1h-1v1h-2v-1h-1v1h-1v1h-1v1h-2v1h-1v1h-5v2h-2v1h-1v1h-2v-1h-1v1h-1v1h-2v1h-2v1h-1v2h-1v-2h-1v1h-1v1h-1v1h-2v1h-2v1h-1v-1h-1v1h-1v1h-3v1h-1v1h-1v1h-1v-2h-1v2h-2v1h-1v1h-2v1h-1v1h-1v-1h-2v1h-1v1h-1v1h-2v1h-4v1h-1v1h-1v1h-2v1h-1v1h-1v-1h-1v1h-1v1h-2v1h-1v1h-3v-1h-1v1h-2v2h-1v1h-2v1h-3v1h-2v1h-2v1h-1v1h-2v-1h-1v1h-2v1h-1v1h-1v1h-2v1h-1v-1h-1v1h-1v1h-3v2h-1v1h-2v-1h-1v1h-1v1h-2v1h-1v1h-2v1h-1v-1h-1v1h-1v1h-1v1h-2v1h-2v1h-1v-1h-1v1h-2v1h-1v2h-2v1h-2v-1h-1v1h-2v1h-1v1h-2v2h-2v-1h-2v1h-1v1h-1v1h-2v1h-1v1h-1v-2h-1v1h-1v2h-3v1h-1v2h-2v-1h-1v1h-3v1h-2v2h-2v-1h-1v1h-1v1h-1v1h-2v1h-1v1h-2v-1h-1v1h-1v1h-2v1h-1v1h-1v1h-2v-1h-1v1h-1v1h-2v1h-1v1h-2v2h-1v-2h-1v1h-1v1h-2v1h-1v1h-2v1h-1v-1h-1v1h-1v1h-2v1h-2v1h-1v1h-1v-1h-1v1h-1v1h-2v1h-1v1h-2v1h-1v-1h-1v1h-1v1h-2v1h-1v1h-2v1h-2v1h-3v2h-1v1h-1v-1h-1v1h-1v-1h-1v1h-1v1h-1v1h-2v1h-1v1h-2v-1h-1v1h-1v1h-1v1h-1v1h-3v1h-2v1h-2v2h-3v1h-5v2h-2v1h-2v1h-1v-1h-1v1h-1v1h-1v1h-1v1h-2v1h-1v1h-1v-1h-1v1h-2v2h-3v1h-1v1h-1v-1h-1v1h-1v1h-2v1h-2v2h-2v-1h-1v1h-1v1h-1v1h-2v2h-1v1h-2v-1h-1v1h-1v1h-2v2h-2v1h-4v2h-2v1h-3v1h-4v1h-2v1h-4v-1h-1v-1h-1v-2h-1v-2h-1v-2h-1v-4h-1v-6h-1v-5h-1v-4h-1v-3h-1v-3h-1v-3h-1v-3h-1v-2h-2v5h-1v10h-1v9h-2v-9h-1v-23h-1v-29h-1v3h-1v37h-1v39h-1v34h-1v32h-1v29h-1v30h-1v29h-1v26h-1v22h-1v19h-1v17h-1v10h-1v11h-1v7h-1v5h-1v3h-1v4h-1v4h-1v2h-2v-1h-1v1h-2v-1h-3v1h-1v-1h-13v-1h-1v1h-2v-1h-1v1h-3v-1h-1v1h-3v-1h-1v1h-1v-1h-2v1h-1v-1h-5v1h-1v-1h-8v-1h-2v1h-1v-1h-1v1h-1v-1h-11v1h-1v-1h-1v1h-1v-1h-2v-1h-1v1h-2v-1h-2v1h-1v-1h-2v1h-1v-1h-10v-1h-1v1h-2v-1h-1v1h-2v-1h-1v1h-3v-1h-3v1h-2v-1h-2v1h-1v-1h-3v-1h-1v1h-6v-1h-1v1h-3v-1h-1v2h-1v-1h-1v-1h-10v-1h-3v1h-8v-1h-3v1h-3v-1h-4v1h-2v-1h-4v1h-1v-1h-9v1h-1v-1h-1v-1h-1v1h-4v-1h-1v1h-1v-1h-2v1h-1v-1h-3v-1h-3v1h-1v-1h-7v1h-1v-1h-3v-1h-3v-1h-2v1h-3v-1h-2v1h-1v-1h-2v-1h-1v1h-3v-1h-3v-1h-4v-1h-1v1h-3v-1h-1v-1h-1v1h-4v-2h-2v1h-3v-1h-1v-1h-1v1h-2v-1h-2v-1h-2v2h-1v-1h-2v-1h-1v-1h-1v1h-1v1h-1v-1h-1v-1h-3v1h-1v-1h-1v-1h-1v-1h-2v2h-1v-1h-1v-2h-1v-2h-1v2h-1v1h-1v1h-1v-2h-1v-4h-1v1h-1v2h-1v2h-1v-2h-1v-2h-1v-3h-1v3h-1v3h-1v-2h-1v-6h-1v-8h-1v2h-1v2h-1v-12h-1v-24h-1v-33h-1v-38h-1v-40h-1v-40h-1v-28h-1v-9h-1v-5h-1v-7h-1v-3h-1v-2h-1v-3h-1v-1h-1v-1h-1v-2h-1v-2h-2v-2h-1v-1h-1v-1h-1v-1h-1v-1h-1v1h-4v2h-1v1h-1v-1h-2v1h-1v1h-2v1h-1v1h-2v-1h-1v1h-2v1h-1v1h-1v1h-1v1h-2v-1h-1v1h-2v1h-1v2h-3v1h-4v1h-1v1h-1v1h-2v1h-1v-1h-2v1h-1v1h-1v1h-2v1h-1v2h-1v-2h-1v1h-1v1h-2v1h-1v1h-2v1h-1v-1h-1v1h-1v1h-2v1h-1v1h-2v1h-1v-1h-1v1h-2v2h-2v1h-2v2h-1v-2h-1v1h-1v1h-2v1h-1v1h-5v2h-2v1h-2v1h-1v1h-1v-1h-1v1h-2v1h-1v1h-2v1h-1v1h-1v-1h-2v2h-2v1h-2v1h-1v1h-1v-1h-2v1h-1v2h-3v2h-2v-1h-2v1h-1v2h-1v-1h-1v1h-1v1h-1v1h-1v-2h-1v1h-1v1h-1v1h-1v1h-1v1h-2v1h-1v-2h-1v1h-1v1h-1v1h-1v1h-1v1h-3v1h-1v-1h-1v2h-2v1h-2v1h-1v1h-1v-1h-2v1h-1v1h-1v1h-1v1h-2v1h-1v-1h-2v1h-1v1h-1v1h-1v1h-2v1h-1v-1h-2v1h-1v1h-1v1h-1v1h-2v1h-1v-1h-1v1h-1v1h-3v1h-1v1h-1v1h-1v-1h-1v1h-1v1h-1v1h-3v1h-1v1h-1v-1h-2v2h-2v1h-1v1h-2v1h-1v-1h-1v1h-1v1h-2v1h-1v1h-2v1h-1v-1h-1v1h-1v1h-2v1h-2v1h-1v1h-1v-1h-2v2h-2v1h-2v1h-1v1h-1v-1h-1v1h-2v1h-1v1h-1v1h-1v1h-2v-1h-1v1h-1v1h-2v1h-1v1h-1v1h-2v-1h-1v1h-1v1h-2v1h-2v2h-2v-1h-1v1h-1v1h-2v1h-1v1h-1v1h-3v1h-3v1h-1v1h-1v1h-2v-1h-1v1h-1v1h-2v1h-1v1h-2v1h-1v-1h-2v2h-2v1h-1v1h-2v1h-1v-1h-1v1h-1v1h-2v2h-2v1h-2v-1h-1v1h-1v1h-1v1h-2v1h-1v1h-3v1h-3v1h-1v1h-1v1h-4v1h-1v1h-2v1h-1v2h-1v-1h-2v1h-2v1h-2v1h-1v1h-1v1h-1v-1h-2v1h-2v2h-2v1h-4v1h-1v1h-2v1h-1v1h-1v1h-1v-1h-1v1h-1v1h-3v1h-1v1h-4v1h-1v2h-1v-1h-1v2h-1v1h-2v-1h-1v1h-1v1h-2v1h-1v1h-5v1h-1v2h-2v1h-2v1h-1v-1h-1v1h-2v1h-1v1h-2v1h-1v1h-1v-1h-2v2h-2v1h-2v1h-1v1h-1v-1h-1v1h-1v1h-2v2h-3v1h-1v-1h-1v1h-2v1h-1v1h-1v2h-3v-1h-1v1h-1v1h-1v1h-2v1h-1v1h-1v1h-1v-1h-1v1h-2v1h-2v1h-1v1h-1v1h-1v-1h-1v1h-1v1h-3v2h-2v1h-4v1h-1v1h-1v1h-2v2h-1v-2h-1v1h-1v1h-1v1h-2v1h-2v2h-1v-2h-1v1h-2v1h-1v1h-1v1h-1v1h-2v-1h-1v1h-1v1h-1v1h-2v1h-1v1h-1v1h-1v-1h-2v1h-1v1h-2v1h-1v1h-1v1h-1v-1h-2v2h-2v1h-2v1h-1v1h-1v-1h-1v1h-2v1h-1v1h-2v1h-1v1h-1v-1h-1v1h-2v2h-2v1h-1v1h-2v-1h-1v1h-1v1h-1v1h-1v1h-3v2h-1v-1h-2v1h-1v1h-2v2h-5v1h-1v1h-1v1h-1v1h-2v1h-1v-1h-2v1h-1v1h-1v1h-1v1h-3v2h-1v-1h-1v1h-1v1h-2v2h-1v-1h-1v1h-3v2h-4v1h-1v1h-3v1h-2v1h-1v1h-3v1h-2v2h-4v2h-4v1h-1v1h-2v1h-3v1h-2v1h-1v1h-1v-1h-1v1h-1v1h-1v1h-4v2h-1v1h-4v1h-1v1h-1v1h-1v-1h-1v1h-1v1h-1v1h-4v2h-1v1h-1v1h-1v-1h-2v1h-1v1h-1v1h-4v2h-1v1h-4v1h-1v2h-2v-1h-2v2h-1v2h-2v-1h-2v1h-1v2h-5v2h-1v1h-1v-1h-3v2h-1v2h-2v-2h-1v1h-1v1h-1v2h-2v-2h-1v1h-1v3h-1v2h-1v1h-1v-4h-1v-1h-1v4h-1v2h-1v1h-1v-2h-1v-2h-2v4h-1v2h-1v-2h-1v-11h-1v-5h-1v-4h-1v-3h-2v-1h-1v-1h-1v1h-1v1h-1v2h-1v1h-1v-4h-1v-6h-1v5h-1v5h-1v6h-1v8h-1v3h-1v2h-1v3h-1v1h-1v1h-2v-1h-1v1h-1v-1h-1v1h-1v-1h-1v1h-3v-1h-7v1h-1v-1h-2v1h-3v-1h-2v1h-3v-1h-4v1h-1v-1h-2v1h-5v-1h-7v1h-1v-1h-7v1h-1v-1h-2v1h-2v-1h-10v1h-1v-1h-4v1h-1v-1h-2v1h-1v-1h-2v1h-1v-1h-1v2h-1v-2h-1v1h-2v-1h-2v1h-1v-1h-4v1h-2v-1h-1v1h-2v-1h-1v1h-1v-1h-5v1h-1v-1h-5v1h-2v-1h-2v1h-1v-1h-3v1h-1v-1h-4v1h-2v-1h-1v1h-1v-1h-2v1h-1v-1h-6v1h-1v-1h-4v1h-1v-1h-9v1h-3v-1h-1v1h-1v-1h-5v1h-1v-1h-2v1h-3v-1h-1v1h-1v-1h-1v1h-1v-1h-1v1h-2v-1h-2v1h-3v-1h-1v1h-1v-1h-8v1h-1z" fill="#ee3b5e"/>
<path d="M4 512h1v1h1v1h1v-2h1v1h1v1h2v-1h1v1h1v-1h4v1h1v-2h1v1h4v1h1v-1h4v1h2v-2h1v1h4v2h1v-2h1v1h1v-1h5v1h1v-1h1v1h1v-1h5v1h1v-1h2v1h1v-1h4v1h2v-1h4v1h1v-1h3v-1h1v1h3v1h3v-1h2v1h1v-1h2v1h1v-1h4v1h1v-1h2v1h1v-1h7v1h1v-1h5v1h1v-1h1v1h2v-1h2v-1h1v2h1v-1h3v1h1v-1h3v1h1v-1h1v-1h1v1h2v1h2v-1h1v-1h1v1h1v1h1v-2h1v1h1v-1h1v2h4v-1h1v1h1v-1h3v1h2v-1h1v1h3v-1h2v1h2v-2h2v1h1v1h1v-2h1v2h1v-1h7v-1h1v1h1v-1h1v1h6v1h1v-1h2v1h1v-1h4v-1h1v1h3v1h1v-1h1v-1h1v1h1v1h1v-1h2v-1h1v2h1v-2h1v2h1v-1h2v1h1v1h1v3h1v5h1v6h1v17h1v19h1v18h1v25h1v25h1v24h1v32h1v30h1v31h1v31h1v34h1v32h1v25h1v26h1v3h1v-1h1v2h1v-1h8v-1h1v1h5v1h1v-1h1v-1h2v1h1v-2h1v1h3v1h1v-1h2v1h1v-1h1v1h1v-1h5v-1h1v1h1v1h1v-1h1v-1h1v1h9v-1h1v1h2v-1h1v-1h1v1h1v1h2v-1h1v1h2v-1h4v-1h2v1h2v-2h1v2h2v-1h1v1h2v-1h1v1h1v-1h4v1h2v-1h1v1h1v-1h2v-1h2v2h1v-1h1v1h1v-2h1v1h4v-1h1v1h1v-1h3v1h2v-1h3v1h2v-2h1v2h1v-1h1v1h3v-2h1v1h1v1h1v-1h12v1h1v-2h1v1h1v-2h1v2h3v-1h1v1h2v-1h2v-1h1v1h4v1h3v-1h1v1h1v-1h1v1h1v-1h3v-1h3v1h1v-1h1v1h1v-1h1v1h1v1h1v-1h2v-2h2v1h1v-1h1v1h4v-1h1v1h2v1h1v-1h1v1h1v-2h1v2h2v-1h3v-1h1v1h11v-1h12v-1h1v1h2v-1h1v1h6v-1h1v1h1v-1h1v1h5v-1h9v1h1v-2h1v1h2v-1h1v2h1v-1h3v-1h1v1h4v-1h1v1h2v-1h3v1h1v-1h3v-1h1v2h2v-1h2v1h1v-1h3v-1h1v1h1v-1h2v1h2v-1h1v2h1v-2h1v1h4v-1h2v1h1v-1h1v1h2v-1h1v1h2v-1h2v-1h1v1h9v-1h1v1h3v-1h1v1h1v-1h1v1h7v-1h1v1h1v-1h2v1h1v-1h4v1h1v-1h3v-2h1v2h1v-1h2v1h1v-2h1v2h1v-1h3v1h1v-1h2v1h1v-1h3v1h4v-1h1v1h1v-1h10v-1h1v1h8v-1h1v1h1v-1h3v1h1v-2h1v2h1v-1h2v1h1v-2h1v2h1v-1h1v1h2v-1h1v1h3v-1h1v1h1v-1h2v1h1v-1h1v-1h1v1h2v1h1v-1h1v1h2v-1h1v1h1v-3h1v1h2v2h1v-1h1v-1h2v2h1v-1h7v-1h4v1h2v-1h1v1h1v-1h2v1h1v-1h2v-1h1v2h2v-1h4v1h1v-1h2v-1h3v1h1v1h1v-1h4v-1h1v1h2v-1h2v1h3v-1h2v1h1v-1h1v1h1v-2h2v2h1v-1h7v1h2v-1h4v1h1v-1h1v-1h1v2h3v-3h1v2h1v-1h1v1h4v1h1v-2h4v-1h1v2h4v-1h5v-1h1v1h1v1h1v-1h1v-1h1v1h8v-1h1v1h1v-1h3v1h1v-1h1v1h1v-1h1v1h1v-1h1v1h2v-1h2v1h1v-1h1v-1h1v2h1v-2h1v1h1v-1h1v1h2v1h4v-1h4v-1h1v1h1v1h1v-1h3v-1h1v1h1v1h1v-1h1v-1h4v1h2v-2h1v1h2v1h2v-1h1v-1h1v1h1v1h2v-1h1v1h2v-1h5v-1h1v2h1v-1h4v-1h3v-1h1v2h1v-2h2v1h3v-1h1v1h1v-1h3v1h1v-1h5v1h1v-1h1v-1h1v1h1v-1h1v1h2v-1h3v-1h1v-1h2v-1h1v-1h1v-1h1v-1h1v-5h1v-7h1v-8h1v-11h1v-10h1v-14h1v-26h1v-24h1v-31h1v-31h1v-29h1v-27h1v-30h1v-37h1v-48h1v-31h1v-24h1v-15h1v-12h1v-5h1v4h1v10h1v10h1v19h1v-4h1v-4h2v4h1v6h1v-1h1v-5h1v-3h1v2h1v5h1v2h1v-3h1v-4h2v2h1v4h2v-4h1v-1h1v1h1v1h1v3h1v-2h1v-2h1v-1h1v2h1v1h3v-4h1v1h1v1h1v2h2v-2h1v-1h2v2h2v-1h2v-1h1v1h1v1h1v1h2v-1h1v-1h1v2h2v1h1v-1h1v1h1v-1h1v1h1v-1h1v1h2v1h1v-1h1v1h2v1h2v1h2v-1h1v2h1v-1h6v1h1v-1h1v1h1v-1h1v2h1v-1h1v1h6v1h3v-1h1v1h2v1h1v-1h1v1h1v-1h1v1h1v-1h2v2h1v-1h3v1h3v-1h1v1h6v1h2v-1h2v1h1v-1h2v1h1v-1h2v1h1v-2h1v1h1v-1h2v1h1v-1h1v1h3v-1h1v1h1v-1h3v-1h1v1h4v-1h1v1h1v-1h2v1h1v1h1v-1h1v-1h4v1h3v-1h8v1h1v-1h2v-1h2v1h2v-1h2v1h1v-1h2v-1h1v1h3v-1h1v2h1v-1h2v-1h1v1h2v1h2v-1h2v1h1v-1h3v1h5v1h1v-1h1v1h1v-1h4v1h1v-1h1v1h3v-1h1v1h4v1h1v-1h1v1h1v-1h2v1h1v-2h1v1h1v1h3v-1h1v1h1v-1h1v1h1v-1h1v1h1v1h1v-2h1v1h1v1h1v-1h2v1h3v-1h2v1h5v1h1v-1h3v1h2v-1h3v1h2v1h1v-1h4v-1h1v2h2v-1h7v1h2v-1h3v1h1v-1h1v1h2v1h2v1h1v2h1v1h1v2h1v1h1v2h1v2h1v1h1v3h2v3h1v3h1v4h1v4h1v3h1v5h1v5h1v8h1v13h1v15h1v27h1v30h1v26h1v24h1v25h1v21h1v25h1v22h1v16h1v19h1v18h1v12h1v14h1v10h1v8h1v7h1v1h1v1h2v1h2v-1h1v1h17v-1h1v1h1v1h1v-2h1v1h3v1h1v-1h3v-1h1v1h5v-1h1v1h1v-1h2v2h1v-1h1v-1h1v1h5v-1h1v1h2v-1h1v1h1v-1h1v1h1v-1h2v1h2v-1h2v1h1v-1h2v1h5v-1h3v1h1v-1h1v1h3v-1h5v-1h1v1h3v1h1v-1h1v1h1v-1h1v1h2v-2h1v1h5v-1h1v1h1v1h1v-1h2v1h1v-2h2v1h1v1h2v-1h3v1h1v-1h2v1h2v-2h1v1h5v-1h1v1h1v-2h1v1h2v1h2v-1h3v1h2v-1h1v1h4v-1h1v1h2v-1h3v-1h1v1h1v1h1v-2h1v2h1v-1h2v1h1v-2h1v1h1v1h1v-1h4v1h1v-1h4v1h1v-1h6v-1h1v1h1v-1h1v1h2v-2h1v2h2v-1h4v1h3v-1h1v1h2v-1h1v1h1v-1h1v1h2v-1h1v-1h1v1h1v-1h1v1h1v1h1v-1h8v-1h1v1h5v-1h1v1h2v-1h2v1h1v-1h1v1h1v-3h1v3h2v-1h1v1h3v-2h1v2h2v-1h1v-1h1v1h1v-1h1v2h1v-1h1v1h2v-1h5v1h1v-1h7v1h1v-1h2v1h1v-1h4v-1h1v1h1v-1h3v1h1v-1h1v1h1v-1h1v1h1v-1h2v1h1v-1h2v1h3v-1h1v1h1v-1h1v1h1v-1h8v1h1v-1h1v-1h1v1h2v-1h1v1h1v-1h4v-1h1v1h4v-1h1v1h1v-1h2v1h2v-1h1v1h1v-1h6v-1h1v1h2v-1h2v-1h2v-1h6v-1h2v-4h1v-4h1v-5h1v-8h1v-8h1v-13h1v-26h1v-25h1v-30h1v-29h1v-29h1v-28h1v-33h1v-34h1v-31h1v-55h1v-27h1v-35h1v-12h1v-8h1v1h1v8h1v10h1v12h1v19h1v7h2v-6h1v-2h1v4h1v3h1v1h1v-5h1v-3h1v4h1v5h1v-2h1v-3h1v-3h1v4h1v3h1v-1h1v-3h1v-1h1v1h1v3h2v-4h2v2h1v1h2v-3h2v1h1v1h1v1h1v-2h3v2h1v-1h2v-1h1v1h1v1h2v-1h4v1h1v1h1v-1h1v1h3v-1h1v2h1v-1h1v1h3v2h1v-1h1v1h5v1h1v-1h1v1h1v1h1v-1h1v2h1v1h1v-2h2v1h1v1h3v1h1v-1h1v1h1v1h2v-1h1v2h1v-2h1v3h1v-2h1v1h1v1h1v-1h2v1h1v1h4v1h3v-1h2v1h6v1h5v-1h2v1h1v-1h1v1h3v-1h4v1h2v1h1v-1h1v-1h2v1h4v-1h2v1h3v-1h2v-2h2v2h3v-1h1v1h1v-1h3v-2h1v1h1v1h1v-1h2v-1h1v1h3v-1h2v1h1v-1h1v-1h1v1h2v-1h5v-1h1v1h2v-1h2v1h2v-2h1v1h1v5h-1v1h-1v-1h-1v2h-1v-2h-1v1h-3v-1h-1v1h-3v1h-1v-1h-1v1h-2v-1h-1v1h-5v1h-1v1h-2v-1h-1v1h-1v-1h-2v1h-5v1h-4v1h-4v-1h-1v1h-2v-1h-1v1h-4v1h-3v-1h-2v1h-1v-1h-1v-1h-1v2h-2v-1h-1v-1h-1v1h-2v1h-1v-1h-2v1h-1v1h-1v-2h-1v-1h-1v1h-1v1h-1v-2h-1v1h-1v-1h-5v1h-1v-1h-5v-1h-1v-1h-1v1h-2v-1h-1v-1h-1v1h-1v-1h-1v1h-2v-2h-6v-1h-2v-1h-4v-1h-1v1h-1v-1h-1v-1h-4v-1h-1v-1h-1v1h-2v-1h-2v-1h-3v-1h-1v2h-2v-1h-1v-1h-1v-1h-3v-1h-1v1h-2v-1h-3v1h-3v-2h-2v-1h-1v2h-1v2h-1v-3h-1v-2h-1v1h-1v2h-1v1h-1v-2h-1v-3h-1v2h-1v2h-1v1h-1v-2h-1v-2h-1v2h-1v1h-1v2h-1v-2h-1v-3h-1v2h-1v3h-1v2h-1v-3h-1v-3h-1v1h-1v6h-2v-4h-1v-6h-1v5h-1v6h-2v-5h-1v-6h-1v4h-1v6h-1v4h-1v-9h-1v-6h-1v-21h-1v-12h-1v-10h-1v-1h-1v13h-1v33h-1v28h-1v55h-1v31h-1v34h-1v34h-1v27h-1v30h-1v28h-1v29h-1v26h-1v27h-1v13h-1v9h-1v9h-1v3h-1v5h-1v4h-1v1h-1v-1h-1v1h-2v2h-3v1h-1v1h-1v-1h-2v1h-1v1h-2v-2h-1v2h-2v-1h-1v1h-1v-1h-3v1h-2v-1h-1v1h-4v-1h-1v1h-3v1h-5v1h-1v-1h-7v1h-1v-1h-3v2h-1v-1h-1v-1h-3v1h-1v-1h-1v2h-1v-2h-5v2h-1v-2h-3v1h-1v-1h-1v1h-3v-1h-1v1h-2v-1h-1v1h-1v-1h-1v1h-2v-1h-1v1h-7v1h-1v-1h-2v1h-1v-1h-3v1h-3v-1h-1v2h-1v-1h-4v-1h-1v1h-1v-1h-2v1h-1v1h-2v-1h-1v-1h-1v1h-1v1h-1v-1h-3v-1h-1v1h-2v-1h-1v1h-2v1h-1v-1h-1v1h-1v-1h-3v-1h-1v1h-1v1h-1v-1h-4v1h-1v-2h-1v1h-3v1h-1v-1h-3v1h-1v-1h-2v-1h-1v2h-2v-1h-1v1h-2v1h-1v-2h-4v1h-6v1h-1v-1h-1v1h-1v-1h-2v1h-1v-1h-4v1h-1v-1h-2v1h-2v-1h-1v1h-2v-1h-1v1h-3v-1h-2v2h-1v-1h-4v-1h-1v1h-1v-1h-1v1h-1v1h-1v-1h-1v-1h-1v1h-3v1h-1v-1h-7v-1h-2v1h-1v1h-1v-1h-1v-1h-1v2h-1v-1h-2v2h-1v-2h-2v1h-1v-1h-1v1h-3v1h-1v-2h-2v1h-1v-1h-1v2h-1v-1h-1v-1h-2v1h-1v-1h-1v1h-1v-1h-1v1h-1v-1h-1v1h-2v-1h-1v1h-1v-1h-1v1h-2v-1h-1v1h-3v-1h-1v1h-3v1h-1v-2h-1v1h-2v1h-1v-1h-1v-1h-2v1h-1v-1h-1v1h-2v-1h-1v1h-1v-1h-1v1h-3v1h-1v-2h-2v2h-2v-2h-2v1h-2v-1h-1v1h-4v1h-1v-2h-1v1h-2v-1h-1v1h-3v-1h-1v1h-2v1h-1v-2h-1v1h-1v1h-2v-1h-3v1h-2v-1h-2v-1h-1v1h-6v1h-2v-1h-1v-1h-1v1h-4v-1h-1v2h-1v-1h-1v1h-1v-1h-1v2h-1v-1h-1v-1h-2v-1h-3v-2h-1v-1h-1v-9h-1v-8h-1v-10h-1v-14h-1v-12h-1v-18h-1v-18h-1v-18h-1v-20h-1v-24h-1v-24h-1v-24h-1v-23h-1v-27h-1v-30h-1v-27h-1v-14h-1v-14h-1v-6h-1v-7h-1v-3h-1v-5h-1v-3h-1v-2h-1v-3h-1v-3h-1v-2h-1v-1h-1v-1h-1v-2h-1v-2h-1v-2h-1v-2h-1v-1h-1v-1h-1v-1h-2v-1h-1v-1h-2v1h-6v-1h-3v1h-4v-1h-2v1h-1v1h-1v-2h-3v1h-2v-1h-1v-1h-1v1h-1v-1h-1v1h-1v-1h-2v1h-2v-1h-1v1h-2v-1h-2v1h-1v-1h-2v-1h-1v1h-1v-1h-1v2h-1v-1h-5v-1h-7v-1h-2v1h-1v-1h-1v1h-4v-1h-5v-1h-1v2h-1v-1h-2v-1h-2v1h-1v-1h-1v1h-2v-1h-6v-1h-2v1h-1v-1h-1v-1h-1v2h-4v-1h-2v1h-1v-1h-1v1h-2v-1h-2v2h-1v-2h-6v1h-1v-1h-2v1h-1v1h-1v-1h-1v-1h-1v1h-5v1h-1v-1h-1v1h-1v-1h-1v1h-1v-1h-5v3h-1v-3h-1v1h-5v-1h-1v1h-2v1h-1v-1h-2v1h-1v-1h-1v1h-1v-1h-1v2h-2v-1h-3v1h-1v-1h-3v1h-1v-1h-1v1h-1v-1h-4v1h-1v-1h-1v1h-4v-1h-1v1h-1v-1h-1v1h-1v-1h-3v2h-1v-2h-1v1h-1v-1h-2v1h-1v-2h-1v1h-1v-1h-4v-1h-4v1h-1v-1h-2v-1h-3v1h-2v-1h-1v1h-1v-2h-3v1h-1v-2h-2v1h-2v-1h-3v-1h-4v-1h-1v1h-1v-1h-2v1h-1v-1h-3v-1h-7v-1h-2v-1h-3v1h-2v-1h-1v-1h-1v1h-4v-2h-2v1h-1v1h-1v4h-1v-3h-1v-2h-2v2h-1v1h-2v-1h-1v-2h-1v1h-1v2h-1v2h-1v-3h-1v-1h-1v-2h-1v4h-1v2h-2v-3h-1v-4h-1v2h-1v5h-1v2h-1v-2h-1v-4h-1v-4h-1v6h-1v3h-1v1h-1v-3h-1v-5h-1v-1h-1v5h-1v2h-1v-5h-1v-18h-1v-12h-1v-7h-1v10h-1v16h-1v23h-1v32h-1v48h-1v37h-1v30h-1v27h-1v29h-1v31h-1v31h-1v25h-1v25h-1v13h-1v11h-1v11h-1v9h-1v6h-1v6h-1v4h-1v-1h-1v2h-1v2h-1v-1h-2v1h-2v1h-1v1h-1v-1h-1v1h-10v1h-1v-1h-1v1h-2v-1h-2v1h-2v1h-3v-1h-2v1h-2v1h-1v-2h-2v1h-3v1h-1v-2h-1v2h-1v-1h-3v1h-1v1h-1v-2h-2v1h-3v-1h-1v1h-3v-1h-2v1h-5v1h-1v-1h-3v-1h-1v1h-3v1h-1v-1h-2v2h-1v-1h-1v-1h-4v1h-1v-1h-1v1h-1v-1h-1v1h-1v-1h-1v1h-2v-1h-1v2h-2v-2h-2v-1h-1v1h-1v1h-2v-1h-1v1h-4v-1h-1v1h-1v-1h-1v1h-1v1h-3v-1h-2v1h-2v-1h-2v1h-3v1h-2v-1h-1v-1h-1v1h-1v-1h-1v1h-2v-1h-1v1h-2v1h-2v-1h-2v1h-1v-1h-3v1h-1v-1h-2v2h-1v-3h-1v2h-2v-1h-1v1h-1v-1h-3v1h-1v1h-1v-2h-1v1h-4v1h-1v-3h-1v1h-2v1h-3v1h-1v-1h-1v-1h-1v1h-4v-1h-1v1h-1v1h-2v-2h-2v2h-1v-1h-6v2h-1v-2h-1v-1h-1v2h-1v-1h-5v1h-2v-1h-1v1h-4v-1h-3v1h-6v-1h-3v1h-6v-1h-1v2h-1v-1h-9v1h-1v1h-1v-1h-1v-1h-2v1h-1v-1h-5v1h-4v-1h-1v1h-2v-1h-4v1h-2v1h-1v-1h-5v-1h-1v2h-1v-1h-2v1h-1v-1h-2v1h-1v-1h-5v2h-1v-1h-1v-1h-2v1h-3v1h-1v-2h-2v1h-4v-1h-1v1h-6v-1h-1v2h-2v-2h-1v2h-1v-1h-3v1h-2v-1h-2v1h-2v-1h-1v1h-2v-1h-4v1h-2v1h-1v-1h-7v-1h-1v1h-14v1h-5v1h-1v-2h-1v3h-1v-3h-1v1h-2v1h-1v-2h-1v1h-4v1h-1v-1h-2v1h-1v-1h-1v1h-1v-1h-2v-1h-1v1h-2v1h-1v-1h-2v1h-1v-1h-3v1h-2v-1h-1v1h-1v-1h-2v1h-1v-1h-1v2h-1v-2h-1v1h-6v1h-1v-1h-2v1h-1v-2h-1v1h-3v2h-1v-1h-1v-1h-1v2h-1v-2h-1v1h-4v-1h-3v1h-6v1h-1v-1h-3v1h-1v-1h-8v1h-1v-1h-1v1h-3v1h-2v-1h-3v-1h-1v1h-2v-1h-1v2h-1v-1h-3v-1h-1v1h-1v1h-1v-1h-1v3h-1v-3h-1v1h-3v-1h-2v1h-1v-1h-4v1h-2v-1h-3v1h-6v1h-1v-1h-8v1h-2v1h-1v-1h-2v-1h-1v2h-1v-1h-1v1h-1v-2h-1v1h-1v-1h-1v1h-2v-1h-1v1h-3v-1h-1v1h-3v-1h-1v1h-1v1h-1v-1h-1v-1h-1v1h-2v1h-3v-1h-3v1h-2v-1h-2v1h-1v-1h-1v1h-1v-1h-3v2h-1v-1h-1v-1h-1v1h-1v1h-1v-2h-1v2h-1v-1h-4v1h-1v-1h-4v1h-1v-1h-1v1h-3v-1h-3v1h-6v1h-1v-1h-5v1h-1v-1h-1v-1h-1v1h-1v-1h-1v1h-1v1h-1v-1h-1v1h-1v-1h-1v1h-1v-1h-1v1h-3v-1h-1v2h-1v-1h-1v-1h-1v1h-5v1h-1v-2h-1v1h-2v2h-1v-1h-1v-1h-2v1h-1v-1h-2v1h-4v-1h-1v2h-1v-1h-3v-1h-1v1h-3v-1h-1v1h-4v1h-1v-1h-6v1h-2v-1h-2v1h-2v-1h-2v1h-2v-1h-1v1h-1v-2h-1v-3h-1v-28h-1v-25h-1v-33h-1v-33h-1v-31h-1v-32h-1v-30h-1v-30h-1v-26h-1v-24h-1v-26h-1v-15h-1v-21h-1v-17h-1v-4h-1v-6h-1v-2h-3v1h-1v-1h-6v-1h-3v1h-1v1h-1v-1h-3v-1h-4v2h-1v-2h-1v2h-1v-2h-1v1h-1v-1h-1v1h-1v-1h-2v1h-4v-1h-4v1h-1v1h-1v-2h-4v1h-2v-1h-5v1h-1v-1h-2v1h-4v-1h-2v1h-1v-1h-2v1h-1v-1h-1v1h-4v-1h-2v1h-5v-1h-3v1h-3v-1h-5v2h-2v-2h-5v2h-1v-1h-1v-1h-3v2h-1v-1h-1v-1h-5v1h-3v-1h-1v1h-1v-1h-3v1h-6v-1h-1v2h-2v-2h-1v1h-2v-2h-1v3h-1v-1h-1v-1h-1v1h-1v-1h-3v1h-2v-1h-4v1h-2v-1h-2v2h-1v-2h-4v1h-4v-1h-5v1h-2v1h-1v-1h-1v-1h-1v1h-1v-1h-1v2h-1v-1h-1v2h-1v-2h-7v-1h-2v1h-3v-1h-1v1h-4v1h-1v-1h-4v-1h-2v1h-2z" fill="#20c4cc"/>
<path d="M178 76h1v1h-1zM178 94h1v1h-1zM178 113h1v1h-1zM178 132h1v1h-1zM178 151h1v1h-1zM178 169h1v1h-1zM178 188h1v1h-1zM178 207h1v1h-1zM178 225h1v1h-1zM178 244h1v1h-1zM178 263h1v1h-1zM178 282h1v1h-1zM178 300h1v1h-1zM178 319h1v1h-1zM178 338h1v1h-1zM178 357h1v1h-1zM178 375h1v1h-1zM178 394h1v1h-1zM178 413h1v1h-1zM178 431h1v1h-1zM178 450h1v1h-1zM178 469h1v1h-1zM178 488h1v1h-1zM178 506h1v1h-1zM178 525h1v1h-1zM178 544h1v1h-1zM178 562h1v1h-1zM178 581h1v1h-1zM178 600h1v1h-1zM178 619h1v1h-1zM178 637h1v1h-1zM178 656h1v1h-1zM178 675h1v1h-1zM178 693h1v1h-1zM178 712h1v1h-1zM178 731h1v1h-1zM178 750h1v1h-1zM178 768h1v1h-1zM178 787h1v1h-1zM178 806h1v1h-1zM178 825h1v1h-1zM178 843h1v1h-1zM178 862h1v1h-1zM178 881h1v1h-1zM178 899h1v1h-1zM178 918h1v1h-1zM178 937h1v1h-1zM178 956h1v1h-1zM178 974h1v1h-1zM353 76h1v1h-1zM353 94h1v1h-1zM353 113h1v1h-1zM353 132h1v1h-1zM353 151h1v1h-1zM353 169h1v1h-1zM353 188h1v1h-1zM353 207h1v1h-1zM353 225h1v1h-1zM353 244h1v1h-1zM353 263h1v1h-1zM353 282h1v1h-1zM353 300h1v1h-1zM353 319h1v1h-1zM353 338h1v1h-1zM353 357h1v1h-1zM353 375h1v1h-1zM353 394h1v1h-1zM353 413h1v1h-1zM353 431h1v1h-1zM353 450h1v1h-1zM353 469h1v1h-1zM353 488h1v1h-1zM353 506h1v1h-1zM353 525h1v1h-1zM353 544h1v1h-1zM353 562h1v1h-1zM353 581h1v1h-1zM353 600h1v1h-1zM353 619h1v1h-1zM353 637h1v1h-1zM353 656h1v1h-1zM353 675h1v1h-1zM353 693h1v1h-1zM353 712h1v1h-1zM353 731h1v1h-1zM353 750h1v1h-1zM353 768h1v1h-1zM353 787h1v1h-1zM353 806h1v1h-1zM353 825h1v1h-1zM353 843h1v1h-1zM353 862h1v1h-1zM353 881h1v1h-1zM353 899h1v1h-1zM353 918h1v1h-1zM353 937h1v1h-1zM353 956h1v1h-1zM353 974h1v1h-1zM527 76h1v1h-1zM527 94h1v1h-1zM527 113h1v1h-1zM527 132h1v1h-1zM527 151h1v1h-1zM527 169h1v1h-1zM527 188h1v1h-1zM527 207h1v1h-1zM527 225h1v1h-1zM527 244h1v1h-1zM527 263h1v1h-1zM527 282h1v1h-1zM527 300h1v1h-1zM527 319h1v1h-1zM527 338h1v1h-1zM527 357h1v1h-1zM527 375h1v1h-1zM527 394h1v1h-1zM527 413h1v1h-1zM527 431h1v1h-1zM527 450h1v1h-1zM527 469h1v1h-1zM527 488h1v1h-1zM527 506h1v1h-1zM527 525h1v1h-1zM527 544h1v1h-1zM527 562h1v1h-1zM527 581h1v1h-1zM527 600h1v1h-1zM527 619h1v1h-1zM527 637h1v1h-1zM527 656h1v1h-1zM527 675h1v1h-1zM527 693h1v1h-1zM527 712h1v1h-1zM527 731h1v1h-1zM527 750h1v1h-1zM527 768h1v1h-1zM527 787h1v1h-1zM527 806h1v1h-1zM527 825h1v1h-1zM527 843h1v1h-1zM527 862h1v1h-1zM527 881h1v1h-1zM527 899h1v1h-1zM527 918h1v1h-1zM527 937h1v1h-1zM527 956h1v1h-1zM527 974h1v1h-1zM702 76h1v1h-1zM702 94h1v1h-1zM702 113h1v1h-1zM702 132h1v1h-1zM702 151h1v1h-1zM702 169h1v1h-1zM702 188h1v1h-1zM702 207h1v1h-1zM702 225h1v1h-1zM702 244h1v1h-1zM702 263h1v1h-1zM702 282h1v1h-1zM702 300h1v1h-1zM702 319h1v1h-1zM702 338h1v1h-1zM702 357h1v1h-1zM702 375h1v1h-1zM702 394h1v1h-1zM702 413h1v1h-1zM702 431h1v1h-1zM702 450h1v1h-1zM702 469h1v1h-1zM702 488h1v1h-1zM702 506h1v1h-1zM702 525h1v1h-1zM702 544h1v1h-1zM702 562h1v1h-1zM702 581h1v1h-1zM702 600h1v1h-1zM702 619h1v1h-1zM702 637h1v1h-1zM702 656h1v1h-1zM702 675h1v1h-1zM702 693h1v1h-1zM702 712h1v1h-1zM702 731h1v1h-1zM702 750h1v1h-1zM702 768h1v1h-1zM702 787h1v1h-1zM702 806h1v1h-1zM702 825h1v1h-1zM702 843h1v1h-1zM702 862h1v1h-1zM702 881h1v1h-1zM702 899h1v1h-1zM702 918h1v1h-1zM702 937h1v1h-1zM702 956h1v1h-1zM702 974h1v1h-1zM1052 76h1v1h-1zM1052 94h1v1h-1zM1052 113h1v1h-1zM1052 132h1v1h-1zM1052 151h1v1h-1zM1052 169h1v1h-1zM1052 188h1v1h-1zM1052 207h1v1h-1zM1052 225h1v1h-1zM1052 244h1v1h-1zM1052 263h1v1h-1zM1052 282h1v1h-1zM1052 300h1v1h-1zM1052 319h1v1h-1zM1052 338h1v1h-1zM1052 357h1v1h-1zM1052 375h1v1h-1zM1052 394h1v1h-1zM1052 413h1v1h-1zM1052 431h1v1h-1zM1052 450h1v1h-1zM1052 469h1v1h-1zM1052 488h1v1h-1zM1052 506h1v1h-1zM1052 525h1v1h-1zM1052 544h1v1h-1zM1052 562h1v1h-1zM1052 581h1v1h-1zM1052 600h1v1h-1zM1052 619h1v1h-1zM1052 637h1v1h-1zM1052 656h1v1h-1zM1052 675h1v1h-1zM1052 693h1v1h-1zM1052 712h1v1h-1zM1052 731h1v1h-1zM1052 750h1v1h-1zM1052 768h1v1h-1zM1052 787h1v1h-1zM1052 806h1v1h-1zM1052 825h1v1h-1zM1052 843h1v1h-1zM1052 862h1v1h-1zM1052 881h1v1h-1zM1052 899h1v1h-1zM1052 918h1v1h-1zM1052 937h1v1h-1zM1052 956h1v1h-1zM1052 974h1v1h-1zM1227 76h1v1h-1zM1227 94h1v1h-1zM1227 113h1v1h-1zM1227 132h1v1h-1zM1227 151h1v1h-1zM1227 169h1v1h-1zM1227 188h1v1h-1zM1227 207h1v1h-1zM1227 225h1v1h-1zM1227 244h1v1h-1zM1227 263h1v1h-1zM1227 282h1v1h-1zM1227 300h1v1h-1zM1227 319h1v1h-1zM1227 338h1v1h-1zM1227 357h1v1h-1zM1227 375h1v1h-1zM1227 394h1v1h-1zM1227 413h1v1h-1zM1227 431h1v1h-1zM1227 450h1v1h-1zM1227 469h1v1h-1zM1227 488h1v1h-1zM1227 506h1v1h-1zM1227 525h1v1h-1zM1227 544h1v1h-1zM1227 562h1v1h-1zM1227 581h1v1h-1zM1227 600h1v1h-1zM1227 619h1v1h-1zM1227 637h1v1h-1zM1227 656h1v1h-1zM1227 675h1v1h-1zM1227 693h1v1h-1zM1227 712h1v1h-1zM1227 731h1v1h-1zM1227 750h1v1h-1zM1227 768h1v1h-1zM1227 787h1v1h-1zM1227 806h1v1h-1zM1227 825h1v1h-1zM1227 843h1v1h-1zM1227 862h1v1h-1zM1227 881h1v1h-1zM1227 899h1v1h-1zM1227 918h1v1h-1zM1227 937h1v1h-1zM1227 956h1v1h-1zM1227 974h1v1h-1zM1401 76h1v1h-1zM1401 94h1v1h-1zM1401 113h1v1h-1zM1401 132h1v1h-1zM1401 151h1v1h-1zM1401 169h1v1h-1zM1401 188h1v1h-1zM1401 207h1v1h-1zM1401 225h1v1h-1zM1401 244h1v1h-1zM1401 263h1v1h-1zM1401 282h1v1h-1zM1401 300h1v1h-1zM1401 319h1v1h-1zM1401 338h1v1h-1zM1401 357h1v1h-1zM1401 375h1v1h-1zM1401 394h1v1h-1zM1401 413h1v1h-1zM1401 431h1v1h-1zM1401 450h1v1h-1zM1401 469h1v1h-1zM1401 488h1v1h-1zM1401 506h1v1h-1zM1401 525h1v1h-1zM1401 544h1v1h-1zM1401 562h1v1h-1zM1401 581h1v1h-1zM1401 600h1v1h-1zM1401 619h1v1h-1zM1401 637h1v1h-1zM1401 656h1v1h-1zM1401 675h1v1h-1zM1401 693h1v1h-1zM1401 712h1v1h-1zM1401 731h1v1h-1zM1401 750h1v1h-1zM1401 768h1v1h-1zM1401 787h1v1h-1zM1401 806h1v1h-1zM1401 825h1v1h-1zM1401 843h1v1h-1zM1401 862h1v1h-1zM1401 881h1v1h-1zM1401 899h1v1h-1zM1401 918h1v1h-1zM1401 937h1v1h-1zM1401 956h1v1h-1zM1401 974h1v1h-1zM1576 76h1v1h-1zM1576 94h1v1h-1zM1576 113h1v1h-1zM1576 132h1v1h-1zM1576 151h1v1h-1zM1576 169h1v1h-1zM1576 188h1v1h-1zM1576 207h1v1h-1zM1576 225h1v1h-1zM1576 244h1v1h-1zM1576 263h1v1h-1zM1576 282h1v1h-1zM1576 300h1v1h-1zM1576 319h1v1h-1zM1576 338h1v1h-1zM1576 357h1v1h-1zM1576 375h1v1h-1zM1576 394h1v1h-1zM1576 413h1v1h-1zM1576 431h1v1h-1zM1576 450h1v1h-1zM1576 469h1v1h-1zM1576 488h1v1h-1zM1576 506h1v1h-1zM1576 525h1v1h-1zM1576 544h1v1h-1zM1576 562h1v1h-1zM1576 581h1v1h-1zM1576 600h1v1h-1zM1576 619h1v1h-1zM1576 637h1v1h-1zM1576 656h1v1h-1zM1576 675h1v1h-1zM1576 693h1v1h-1zM1576 712h1v1h-1zM1576 731h1v1h-1zM1576 750h1v1h-1zM1576 768h1v1h-1zM1576 787h1v1h-1zM1576 806h1v1h-1zM1576 825h1v1h-1zM1576 843h1v1h-1zM1576 862h1v1h-1zM1576 881h1v1h-1zM1576 899h1v1h-1zM1576 918h1v1h-1zM1576 937h1v1h-1zM1576 956h1v1h-1zM1576 974h1v1h-1zM38 151h1v1h-1zM73 151h1v1h-1zM108 151h1v1h-1zM143 151h1v1h-1zM213 151h1v1h-1zM248 151h1v1h-1zM283 151h1v1h-1zM318 151h1v1h-1zM388 151h1v1h-1zM423 151h1v1h-1zM457 151h1v1h-1zM492 151h1v1h-1zM562 151h1v1h-1zM597 151h1v1h-1zM632 151h1v1h-1zM667 151h1v1h-1zM737 151h1v1h-1zM772 151h1v1h-1zM807 151h1v1h-1zM842 151h1v1h-1zM912 151h1v1h-1zM947 151h1v1h-1zM982 151h1v1h-1zM1017 151h1v1h-1zM1087 151h1v1h-1zM1122 151h1v1h-1zM1157 151h1v1h-1zM1192 151h1v1h-1zM1262 151h1v1h-1zM1297 151h1v1h-1zM1331 151h1v1h-1zM1366 151h1v1h-1zM1436 151h1v1h-1zM1471 151h1v1h-1zM1506 151h1v1h-1zM1541 151h1v1h-1zM1611 151h1v1h-1zM1646 151h1v1h-1zM1681 151h1v1h-1zM1716 151h1v1h-1zM38 244h1v1h-1zM73 244h1v1h-1zM108 244h1v1h-1zM143 244h1v1h-1zM213 244h1v1h-1zM248 244h1v1h-1zM283 244h1v1h-1zM318 244h1v1h-1zM388 244h1v1h-1zM423 244h1v1h-1zM457 244h1v1h-1zM492 244h1v1h-1zM562 244h1v1h-1zM597 244h1v1h-1zM632 244h1v1h-1zM667 244h1v1h-1zM737 244h1v1h-1zM772 244h1v1h-1zM807 244h1v1h-1zM842 244h1v1h-1zM912 244h1v1h-1zM947 244h1v1h-1zM982 244h1v1h-1zM1017 244h1v1h-1zM1087 244h1v1h-1zM1122 244h1v1h-1zM1157 244h1v1h-1zM1192 244h1v1h-1zM1262 244h1v1h-1zM1297 244h1v1h-1zM1331 244h1v1h-1zM1366 244h1v1h-1zM1436 244h1v1h-1zM1471 244h1v1h-1zM1506 244h1v1h-1zM1541 244h1v1h-1zM1611 244h1v1h-1zM1646 244h1v1h-1zM1681 244h1v1h-1zM1716 244h1v1h-1zM38 338h1v1h-1zM73 338h1v1h-1zM108 338h1v1h-1zM143 338h1v1h-1zM213 338h1v1h-1zM248 338h1v1h-1zM283 338h1v1h-1zM318 338h1v1h-1zM388 338h1v1h-1zM423 338h1v1h-1zM457 338h1v1h-1zM492 338h1v1h-1zM562 338h1v1h-1zM597 338h1v1h-1zM632 338h1v1h-1zM667 338h1v1h-1zM737 338h1v1h-1zM772 338h1v1h-1zM807 338h1v1h-1zM842 338h1v1h-1zM912 338h1v1h-1zM947 338h1v1h-1zM982 338h1v1h-1zM1017 338h1v1h-1zM1087 338h1v1h-1zM1122 338h1v1h-1zM1157 338h1v1h-1zM1192 338h1v1h-1zM1262 338h1v1h-1zM1297 338h1v1h-1zM1331 338h1v1h-1zM1366 338h1v1h-1zM1436 338h1v1h-1zM1471 338h1v1h-1zM1506 338h1v1h-1zM1541 338h1v1h-1zM1611 338h1v1h-1zM1646 338h1v1h-1zM1681 338h1v1h-1zM1716 338h1v1h-1zM38 431h1v1h-1zM73 431h1v1h-1zM108 431h1v1h-1zM143 431h1v1h-1zM213 431h1v1h-1zM248 431h1v1h-1zM283 431h1v1h-1zM318 431h1v1h-1zM388 431h1v1h-1zM423 431h1v1h-1zM457 431h1v1h-1zM492 431h1v1h-1zM562 431h1v1h-1zM597 431h1v1h-1zM632 431h1v1h-1zM667 431h1v1h-1zM737 431h1v1h-1zM772 431h1v1h-1zM807 431h1v1h-1zM842 431h1v1h-1zM912 431h1v1h-1zM947 431h1v1h-1zM982 431h1v1h-1zM1017 431h1v1h-1zM1087 431h1v1h-1zM1122 431h1v1h-1zM1157 431h1v1h-1zM1192 431h1v1h-1zM1262 431h1v1h-1zM1297 431h1v1h-1zM1331 431h1v1h-1zM1366 431h1v1h-1zM1436 431h1v1h-1zM1471 431h1v1h-1zM1506 431h1v1h-1zM1541 431h1v1h-1zM1611 431h1v1h-1zM1646 431h1v1h-1zM1681 431h1v1h-1zM1716 431h1v1h-1zM38 619h1v1h-1zM73 619h1v1h-1zM108 619h1v1h-1zM143 619h1v1h-1zM213 619h1v1h-1zM248 619h1v1h-1zM283 619h1v1h-1zM318 619h1v1h-1zM388 619h1v1h-1zM423 619h1v1h-1zM457 619h1v1h-1zM492 619h1v1h-1zM562 619h1v1h-1zM597 619h1v1h-1zM632 619h1v1h-1zM667 619h1v1h-1zM737 619h1v1h-1zM772 619h1v1h-1zM807 619h1v1h-1zM842 619h1v1h-1zM912 619h1v1h-1zM947 619h1v1h-1zM982 619h1v1h-1zM1017 619h1v1h-1zM1087 619h1v1h-1zM1122 619h1v1h-1zM1157 619h1v1h-1zM1192 619h1v1h-1zM1262 619h1v1h-1zM1297 619h1v1h-1zM1331 619h1v1h-1zM1366 619h1v1h-1zM1436 619h1v1h-1zM1471 619h1v1h-1zM1506 619h1v1h-1zM1541 619h1v1h-1zM1611 619h1v1h-1zM1646 619h1v1h-1zM1681 619h1v1h-1zM1716 619h1v1h-1zM38 712h1v1h-1zM73 712h1v1h-1zM108 712h1v1h-1zM143 712h1v1h-1zM213 712h1v1h-1zM248 712h1v1h-1zM283 712h1v1h-1zM318 712h1v1h-1zM388 712h1v1h-1zM423 712h1v1h-1zM457 712h1v1h-1zM492 712h1v1h-1zM562 712h1v1h-1zM597 712h1v1h-1zM632 712h1v1h-1zM667 712h1v1h-1zM737 712h1v1h-1zM772 712h1v1h-1zM807 712h1v1h-1zM842 712h1v1h-1zM912 712h1v1h-1zM947 712h1v1h-1zM982 712h1v1h-1zM1017 712h1v1h-1zM1087 712h1v1h-1zM1122 712h1v1h-1zM1157 712h1v1h-1zM1192 712h1v1h-1zM1262 712h1v1h-1zM1297 712h1v1h-1zM1331 712h1v1h-1zM1366 712h1v1h-1zM1436 712h1v1h-1zM1471 712h1v1h-1zM1506 712h1v1h-1zM1541 712h1v1h-1zM1611 712h1v1h-1zM1646 712h1v1h-1zM1681 712h1v1h-1zM1716 712h1v1h-1zM38 806h1v1h-1zM73 806h1v1h-1zM108 806h1v1h-1zM143 806h1v1h-1zM213 806h1v1h-1zM248 806h1v1h-1zM283 806h1v1h-1zM318 806h1v1h-1zM388 806h1v1h-1zM423 806h1v1h-1zM457 806h1v1h-1zM492 806h1v1h-1zM562 806h1v1h-1zM597 806h1v1h-1zM632 806h1v1h-1zM667 806h1v1h-1zM737 806h1v1h-1zM772 806h1v1h-1zM807 806h1v1h-1zM842 806h1v1h-1zM912 806h1v1h-1zM947 806h1v1h-1zM982 806h1v1h-1zM1017 806h1v1h-1zM1087 806h1v1h-1zM1122 806h1v1h-1zM1157 806h1v1h-1zM1192 806h1v1h-1zM1262 806h1v1h-1zM1297 806h1v1h-1zM1331 806h1v1h-1zM1366 806h1v1h-1zM1436 806h1v1h-1zM1471 806h1v1h-1zM1506 806h1v1h-1zM1541 806h1v1h-1zM1611 806h1v1h-1zM1646 806h1v1h-1zM1681 806h1v1h-1zM1716 806h1v1h-1zM38 899h1v1h-1zM73 899h1v1h-1zM108 899h1v1h-1zM143 899h1v1h-1zM213 899h1v1h-1zM248 899h1v1h-1zM283 899h1v1h-1zM318 899h1v1h-1zM388 899h1v1h-1zM423 899h1v1h-1zM457 899h1v1h-1zM492 899h1v1h-1zM562 899h1v1h-1zM597 899h1v1h-1zM632 899h1v1h-1zM667 899h1v1h-1zM737 899h1v1h-1zM772 899h1v1h-1zM807 899h1v1h-1zM842 899h1v1h-1zM912 899h1v1h-1zM947 899h1v1h-1zM982 899h1v1h-1zM1017 899h1v1h-1zM1087 899h1v1h-1zM1122 899h1v1h-1zM1157 899h1v1h-1zM1192 899h1v1h-1zM1262 899h1v1h-1zM1297 899h1v1h-1zM1331 899h1v1h-1zM1366 899h1v1h-1zM1436 899h1v1h-1zM1471 899h1v1h-1zM1506 899h1v1h-1zM1541 899h1v1h-1zM1611 899h1v1h-1zM1646 899h1v1h-1zM1681 899h1v1h-1zM1716 899h1v1h-1z" fill="#b4b4b4"/>
<path d="M38 57h1v1h-1zM73 57h1v1h-1zM108 57h1v1h-1zM143 57h1v1h-1zM178 57h1v1h-1zM213 57h1v1h-1zM248 57h1v1h-1zM283 57h1v1h-1zM318 57h1v1h-1zM353 57h1v1h-1zM388 57h1v1h-1zM423 57h1v1h-1zM457 57h1v1h-1zM492 57h1v1h-1zM527 57h1v1h-1zM562 57h1v1h-1zM597 57h1v1h-1zM632 57h1v1h-1zM667 57h1v1h-1zM702 57h1v1h-1zM737 57h1v1h-1zM772 57h1v1h-1zM807 57h1v1h-1zM842 57h1v1h-1zM877 57h1v1h-1zM912 57h1v1h-1zM947 57h1v1h-1zM982 57h1v1h-1zM1017 57h1v1h-1zM1052 57h1v1h-1zM1087 57h1v1h-1zM1122 57h1v1h-1zM1157 57h1v1h-1zM1192 57h1v1h-1zM1227 57h1v1h-1zM1262 57h1v1h-1zM1297 57h1v1h-1zM1331 57h1v1h-1zM1366 57h1v1h-1zM1401 57h1v1h-1zM1436 57h1v1h-1zM1471 57h1v1h-1zM1506 57h1v1h-1zM1541 57h1v1h-1zM1576 57h1v1h-1zM1611 57h1v1h-1zM1646 57h1v1h-1zM1681 57h1v1h-1zM1716 57h1v1h-1zM3 76h1v1h-1zM3 94h1v1h-1zM3 113h1v1h-1zM3 132h1v1h-1zM3 151h1v1h-1zM3 169h1v1h-1zM3 188h1v1h-1zM3 207h1v1h-1zM3 225h1v1h-1zM3 244h1v1h-1zM3 263h1v1h-1zM3 282h1v1h-1zM3 300h1v1h-1zM3 319h1v1h-1zM3 338h1v1h-1zM3 357h1v1h-1zM3 375h1v1h-1zM3 394h1v1h-1zM3 413h1v1h-1zM3 431h1v1h-1zM3 450h1v1h-1zM3 469h1v1h-1zM3 488h1v1h-1zM3 506h1v1h-1zM3 525h1v1h-1zM3 544h1v1h-1zM3 562h1v1h-1zM3 581h1v1h-1zM3 600h1v1h-1zM3 619h1v1h-1zM3 637h1v1h-1zM3 656h1v1h-1zM3 675h1v1h-1zM3 693h1v1h-1zM3 712h1v1h-1zM3 731h1v1h-1zM3 750h1v1h-1zM3 768h1v1h-1zM3 787h1v1h-1zM3 806h1v1h-1zM3 825h1v1h-1zM3 843h1v1h-1zM3 862h1v1h-1zM3 881h1v1h-1zM3 899h1v1h-1zM3 918h1v1h-1zM3 937h1v1h-1zM3 956h1v1h-1zM3 974h1v1h-1z" fill="#d0d0d0"/>
<path d="M3.5 57V993" stroke="#f59a23" stroke-width="1" stroke-dasharray="5 5" fill="none"/>
<path d="M1750.5 57V993" stroke="#f59a23" stroke-width="1" stroke-dasharray="5 5" fill="none"/>
<path d="M5 525.5H1740" stroke="#c4c4c4" stroke-width="1" stroke-dasharray="5 5" fill="none"/>
<path d="M877.5 63V991" stroke="#c4c4c4" stroke-width="1" stroke-dasharray="5 5" fill="none"/>
</svg>
<svg id="ov" style="left:0;top:0" width="1920" height="1080" viewBox="0 0 1920 1080">
<polygon points="168,57.3 188,57.3 178,66.3" fill="#f5861f"/>
<path d="M169,68H187V87H181.5L178,94L174.5,87H169Z" fill="#000" stroke="#f5861f" stroke-width="2"/>
<path d="M592.5 36.5H586.5V52.5H592.5M1161.5 36.5H1167.5V52.5H1161.5" stroke="#e6e6e6" stroke-width="1" fill="none"/>
<path d="M587 45H1167" stroke="#b9b9b9" stroke-width="2" fill="none"/>
<polygon points="636,33 651.3,33 643.6,38.3" fill="#f5861f"/>
<path d="M637.6,40.6H649.8V51.8H646L643.7,56.5L641.4,51.8H637.6Z" fill="#000" stroke="#f5861f" stroke-width="1.6"/>
<path d="M1710.5,63.8H1741.5Q1744,63.8 1744,66.3V97.8Z" fill="#4d4d4d"/>
<circle cx="1737" cy="70.5" r="4.3" fill="none" stroke="#a6a6a6" stroke-width="1.3"/>
<path d="M1733.6,73.9L1727.6,79.6" stroke="#a6a6a6" stroke-width="2.2" stroke-linecap="round"/>
<polygon points="1730,126.3 1741.7,116.3 1741.7,136.5" fill="#8cc82c"/>
<rect x="1741" y="124.8" width="9.5" height="3" fill="#8cc82c"/>
<path d="M1530.5 403.5H1539M1542.5 403.5H1550.5M1554.5 403.5H1563M1546.5 387V394M1546.5 397V411M1546.5 414V419" stroke="#f5a623" stroke-width="1" fill="none"/>
<path d="M9,132.5H28.5Q30,132.5 31,133.5L41.5,145L31,156.5Q30,157.5 28.5,157.5H9Q6.2,157.5 6.2,154.7V135.3Q6.2,132.5 9,132.5Z" fill="#12170a" stroke="#7fbf2a" stroke-width="1.4"/>
<path d="M9,329.5H28.5Q30,329.5 31,330.5L41.5,342L31,353.5Q30,354.5 28.5,354.5H9Q6.2,354.5 6.2,351.7V332.3Q6.2,329.5 9,329.5Z" fill="#1d1b08" stroke="#e6d92b" stroke-width="1.4"/>
<path d="M9,881.5H28.5Q30,881.5 31,882.5L41.5,894L31,905.5Q30,906.5 28.5,906.5H9Q6.2,906.5 6.2,903.7V884.3Q6.2,881.5 9,881.5Z" fill="#0a1a1c" stroke="#20c4cc" stroke-width="1.4"/>
<path d="M9,879.8H28.5Q30,879.8 31,880.8L41.5,892.3L31,903.8Q30,904.8 28.5,904.8H9Q6.2,904.8 6.2,902.0V882.5999999999999Q6.2,879.8 9,879.8Z" fill="#ec4263" stroke="#ec4263" stroke-width="1.4"/>
<circle cx="1762" cy="503.7" r="2.1" fill="#c2c2c2"/>
<circle cx="1762" cy="512.3" r="2.1" fill="#c2c2c2"/>
<circle cx="1762" cy="521" r="2.1" fill="#c2c2c2"/>
</svg>
<span class="t" style="left:173.60px;top:71px;font-size:15px;color:#f5861f;transform:scaleX(0.8627);font-weight:bold;">T</span>
<span class="t" style="left:640.47px;top:42px;font-size:9.5px;color:#f5861f;font-weight:bold;">T</span>
<span class="t" style="left:15.20px;top:139px;font-size:11.5px;color:#86c32b;transform:scaleX(0.8959);">C 4</span>
<span class="t" style="left:15.20px;top:336px;font-size:11.5px;color:#f0e32d;transform:scaleX(0.8643);">C 1</span>
<span class="t" style="left:15.20px;top:887px;font-size:11.5px;color:#ffffff;transform:scaleX(0.8854);">C 3</span>
<span class="t" style="left:8.50px;top:177px;font-size:17.5px;color:#86c32b;transform:scaleX(1.0231);">Vin</span>
<span class="t" style="left:8.10px;top:302px;font-size:17.5px;color:#f8ec2d;transform:scaleX(1.0130);">Vg</span>
<span class="t" style="left:17.80px;top:849px;font-size:17.5px;color:#ee3b5e;transform:scaleX(0.8638);">ID</span>
<span class="t" style="left:9.40px;top:933px;font-size:17.5px;color:#20c4cc;transform:scaleX(0.9224);">Vds</span>
<div style="left:1769px;top:29px;width:160px;height:967px;border:1px solid #5f5852;"></div>
<span class="t" style="left:1802.60px;top:34px;font-size:12.5px;color:#efefef;transform:scaleX(1.1071);font-weight:bold;">Add New...</span>
<div class="btn" style="left:1778px;top:54px;width:63px;height:37px;"></div>
<div class="btn" style="left:1850px;top:54px;width:63px;height:37px;"></div>
<div class="btn" style="left:1778px;top:100px;width:63px;height:37px;"></div>
<div class="btn" style="left:1850px;top:100px;width:63px;height:37px;"></div>
<div class="btn" style="left:1778px;top:146px;width:63px;height:37px;"></div>
<div class="btn" style="left:1850px;top:146px;width:63px;height:37px;"></div>
<div class="btn" style="left:1778px;top:196px;width:63px;height:37px;"></div>
<div class="btn" style="left:1850px;top:196px;width:63px;height:37px;"></div>
<span class="t" style="left:1784.90px;top:65px;font-size:14.5px;color:#f2f2f2;transform:scaleX(0.9087);">Cursors</span>
<span class="t" style="left:1856.70px;top:65px;font-size:14.5px;color:#f2f2f2;transform:scaleX(0.9641);">Callout</span>
<span class="t" style="left:1780.30px;top:111px;font-size:14.5px;color:#f2f2f2;transform:scaleX(0.9493);">Measure</span>
<span class="t" style="left:1858.50px;top:111px;font-size:14.5px;color:#f2f2f2;transform:scaleX(0.9115);">Search</span>
<span class="t" style="left:1785.60px;top:149px;font-size:14.5px;color:#f2f2f2;transform:scaleX(0.9132);">Results</span>
<span class="t" style="left:1791.97px;top:165px;font-size:14.5px;color:#f2f2f2;transform:scaleX(0.9479);">Table</span>
<span class="t" style="left:1867.80px;top:157px;font-size:14.5px;color:#f2f2f2;transform:scaleX(0.9988);">Plot</span>
<span class="t" style="left:1856.70px;top:207px;font-size:14.5px;color:#f2f2f2;transform:scaleX(0.9938);">More...</span>
<div style="left:1773px;top:189px;width:144px;height:1px;background:#6a615a;"></div>
<div style="left:1773px;top:241px;width:144px;height:1px;background:#6a615a;"></div>
<svg style="left:1790px;top:198px" width="40" height="34" viewBox="1790 198 40 34"><rect x="1798.4" y="203.2" width="21.2" height="18.2" fill="none" stroke="#b9b9b9" stroke-width="2" stroke-dasharray="3.2 3.3" stroke-dashoffset="1.6"/><circle cx="1811" cy="211.3" r="4.6" fill="none" stroke="#bdbdbd" stroke-width="1.6"/><path d="M1807.6,214.6L1803,218" stroke="#bdbdbd" stroke-width="2.4" stroke-linecap="round"/><path d="M1815.4,217.4L1823.6,221.6L1820.6,222.6L1822.8,226.4L1821.2,227.2L1819,223.4L1816.6,225.6Z" fill="#b4b4b4"/></svg>
<div class="badge" style="left:1773px;top:255px;width:144px;height:57px;"><div class="hd" style="height:19px;background:#595a5c;"></div></div>
<span class="t" style="left:1778.70px;top:257px;font-size:14px;color:#f2f2f2;transform:scaleX(0.9297);">Meas 1</span>
<div style="left:1889px;top:259px;width:22px;height:12px;border-radius:6px;background:#22d0d9;border:1px solid #3b2d2d;"></div>
<span class="t" style="left:1897.18px;top:260px;font-size:9.5px;color:#101010;">2</span>
<span class="t" style="left:1778.60px;top:277px;font-size:14px;color:#161616;transform:scaleX(0.9094);">Maximum</span>
<span class="t" style="left:1778.70px;top:296px;font-size:14px;color:#161616;transform:scaleX(0.9248);">µ': 977.0 V</span>
<div class="badge" style="left:1773px;top:320px;width:144px;height:57px;"><div class="hd" style="height:19px;background:#000000;"></div></div>
<span class="t" style="left:1778.70px;top:322px;font-size:14px;color:#f2f2f2;transform:scaleX(0.9297);">Meas 2</span>
<div style="left:1889px;top:324px;width:22px;height:12px;border-radius:6px;background:#ea4161;border:1px solid #3b2d2d;"></div>
<span class="t" style="left:1897.18px;top:325px;font-size:9.5px;color:#ffffff;">3</span>
<span class="t" style="left:1778.60px;top:342px;font-size:14px;color:#161616;transform:scaleX(0.9094);">Maximum</span>
<span class="t" style="left:1778.70px;top:361px;font-size:14px;color:#161616;transform:scaleX(0.9287);">µ': 522.0 A</span>
<div class="badge" style="left:3px;top:1001px;width:90px;height:76px;box-shadow:none;"><div class="hd" style="height:19px;background:#4b4824;border-bottom:1px solid #adadad;"></div></div>
<span class="t" style="left:8.50px;top:1003px;font-size:14px;color:#f8ec2d;transform:scaleX(0.9003);">Ch 1</span>
<span class="t" style="left:9.20px;top:1023px;font-size:14.5px;color:#161616;transform:scaleX(0.8497);">10 V/div</span>
<span class="t" style="left:9.10px;top:1061px;font-size:14.5px;color:#161616;transform:scaleX(0.8721);">1 GHz</span>
<svg style="left:8.9px;top:1041px" width="17" height="13" viewBox="0 0 17 13"><path d="M1.6,7.2C2.2,2.6 5.4,0.8 8,0.8C11,0.8 13.2,3 13.6,6.4" fill="none" stroke="#222" stroke-width="1.1"/><circle cx="8.1" cy="4.3" r="2.6" fill="none" stroke="#222" stroke-width="1.1"/><rect x="0.6" y="6.4" width="2.6" height="5" rx="1.2" fill="#efefef" stroke="#333" stroke-width="0.8"/><rect x="11.6" y="6.6" width="3.6" height="5.4" rx="0.8" fill="#f4f4f4" stroke="#555" stroke-width="0.9"/></svg>
<div class="badge" style="left:98px;top:1001px;width:90px;height:76px;box-shadow:none;"><div class="hd" style="height:19px;background:#1f4144;border-bottom:1px solid #adadad;"></div></div>
<span class="t" style="left:103.50px;top:1003px;font-size:14px;color:#25cbd3;transform:scaleX(0.9003);">Ch 2</span>
<span class="t" style="left:104.20px;top:1023px;font-size:14.5px;color:#161616;transform:scaleX(0.8697);">200 V/div</span>
<span class="t" style="left:104.10px;top:1061px;font-size:14.5px;color:#161616;transform:scaleX(0.9195);">800 MHz</span>
<svg style="left:103.9px;top:1041px" width="17" height="13" viewBox="0 0 17 13"><path d="M1.6,7.2C2.2,2.6 5.4,0.8 8,0.8C11,0.8 13.2,3 13.6,6.4" fill="none" stroke="#222" stroke-width="1.1"/><circle cx="8.1" cy="4.3" r="2.6" fill="none" stroke="#222" stroke-width="1.1"/><rect x="0.6" y="6.4" width="2.6" height="5" rx="1.2" fill="#efefef" stroke="#333" stroke-width="0.8"/><rect x="11.6" y="6.6" width="3.6" height="5.4" rx="0.8" fill="#f4f4f4" stroke="#555" stroke-width="0.9"/></svg>
<span class="t" style="left:170.00px;top:1060px;font-size:9px;color:#111;font-weight:bold;">B</span>
<span class="t" style="left:175.00px;top:1064px;font-size:8px;color:#111;font-weight:bold;">w</span>
<div class="badge" style="left:193px;top:1001px;width:90px;height:76px;box-shadow:none;"><div class="hd" style="height:19px;background:#ea4161;border-bottom:1px solid #adadad;"></div></div>
<span class="t" style="left:198.50px;top:1003px;font-size:14px;color:#ffffff;transform:scaleX(0.9003);">Ch 3</span>
<span class="t" style="left:199.20px;top:1023px;font-size:14.5px;color:#161616;transform:scaleX(0.8653);">100 A/div</span>
<span class="t" style="left:199.20px;top:1042px;font-size:14.5px;color:#161616;transform:scaleX(0.9195);">1 MΩ</span>
<span class="t" style="left:199.10px;top:1061px;font-size:14.5px;color:#161616;transform:scaleX(0.9132);">500 MHz</span>
<span class="t" style="left:265.00px;top:1060px;font-size:9px;color:#111;font-weight:bold;">B</span>
<span class="t" style="left:270.00px;top:1064px;font-size:8px;color:#111;font-weight:bold;">w</span>
<div class="badge" style="left:288px;top:1001px;width:90px;height:76px;box-shadow:none;"><div class="hd" style="height:19px;background:#3b4425;border-bottom:1px solid #adadad;"></div></div>
<span class="t" style="left:293.50px;top:1003px;font-size:14px;color:#8ccb2d;transform:scaleX(0.9003);">Ch 4</span>
<span class="t" style="left:294.20px;top:1023px;font-size:14.5px;color:#161616;transform:scaleX(0.8497);">10 V/div</span>
<span class="t" style="left:294.10px;top:1061px;font-size:14.5px;color:#161616;transform:scaleX(0.8721);">1 GHz</span>
<svg style="left:293.9px;top:1041px" width="17" height="13" viewBox="0 0 17 13"><path d="M1.6,7.2C2.2,2.6 5.4,0.8 8,0.8C11,0.8 13.2,3 13.6,6.4" fill="none" stroke="#222" stroke-width="1.1"/><circle cx="8.1" cy="4.3" r="2.6" fill="none" stroke="#222" stroke-width="1.1"/><rect x="0.6" y="6.4" width="2.6" height="5" rx="1.2" fill="#efefef" stroke="#333" stroke-width="0.8"/><rect x="11.6" y="6.6" width="3.6" height="5.4" rx="0.8" fill="#f4f4f4" stroke="#555" stroke-width="0.9"/></svg>
<svg style="left:236px;top:1001px" width="16" height="18" viewBox="236 1001 16 18"><path d="M243.9,1002V1010" stroke="#000" stroke-width="2.2"/><polygon points="239.1,1008.4 248.7,1008.4 243.9,1016.6" fill="#000"/></svg>
<div style="left:1118px;top:999px;width:1px;height:78px;background:#5a534d;"></div>
<div style="left:1269px;top:999px;width:1px;height:78px;background:#5a534d;"></div>
<div style="left:1811px;top:999px;width:1px;height:78px;background:#5a534d;"></div>
<div class="btn2" style="left:1129px;top:999px;width:40px;height:78px;"></div>
<div style="left:1133px;top:1007px;width:32px;height:2px;background:#f5921e;"></div>
<span class="t" style="left:1135.70px;top:1020px;font-size:14.5px;color:#f2f2f2;transform:scaleX(0.9338);">Add</span>
<span class="t" style="left:1134.35px;top:1036px;font-size:14.5px;color:#f2f2f2;transform:scaleX(0.9143);">New</span>
<span class="t" style="left:1132.40px;top:1052px;font-size:14.5px;color:#f2f2f2;transform:scaleX(0.9048);">Math</span>
<div class="btn2" style="left:1174px;top:999px;width:40px;height:78px;"></div>
<div style="left:1178px;top:1007px;width:32px;height:2px;background:#c6cbe0;"></div>
<span class="t" style="left:1180.70px;top:1020px;font-size:14.5px;color:#f2f2f2;transform:scaleX(0.9338);">Add</span>
<span class="t" style="left:1179.35px;top:1036px;font-size:14.5px;color:#f2f2f2;transform:scaleX(0.9143);">New</span>
<span class="t" style="left:1183.55px;top:1052px;font-size:14.5px;color:#f2f2f2;transform:scaleX(0.8621);">Ref</span>
<div class="btn2" style="left:1219px;top:999px;width:40px;height:78px;"></div>
<div style="left:1223px;top:1007px;width:32px;height:2px;background:#c763f2;"></div>
<span class="t" style="left:1225.70px;top:1020px;font-size:14.5px;color:#f2f2f2;transform:scaleX(0.9338);">Add</span>
<span class="t" style="left:1224.35px;top:1036px;font-size:14.5px;color:#f2f2f2;transform:scaleX(0.9143);">New</span>
<span class="t" style="left:1227.80px;top:1052px;font-size:14.5px;color:#f2f2f2;transform:scaleX(0.8246);">Bus</span>
<div class="badge" style="left:1281px;top:1002px;width:198px;height:74px;"><div class="hd" style="height:19px;background:#58595b;border-bottom:1px solid #a6a6a6;"></div></div>
<span class="t" style="left:1286.70px;top:1004px;font-size:14.5px;color:#f2f2f2;transform:scaleX(0.9794);">Horizontal</span>
<span class="t" style="left:1286.20px;top:1023px;font-size:14.5px;color:#161616;transform:scaleX(0.8300);">1 µs/div</span>
<span class="t" style="left:1392.40px;top:1023px;font-size:14.5px;color:#161616;transform:scaleX(0.8326);">10 µs</span>
<span class="t" style="left:1285.60px;top:1042px;font-size:14.5px;color:#161616;transform:scaleX(0.8695);">SR: 3.125 GS/s</span>
<span class="t" style="left:1391.50px;top:1042px;font-size:14.5px;color:#161616;transform:scaleX(0.8750);">320 ps/pt</span>
<span class="t" style="left:1285.60px;top:1060px;font-size:14.5px;color:#161616;transform:scaleX(0.8670);">RL: 31.25 kpts</span>
<span class="t" style="left:1406.60px;top:1060px;font-size:14.5px;color:#161616;transform:scaleX(0.8834);">10%</span>
<svg style="left:1389px;top:1059px" width="14" height="16" viewBox="1389 1059 14 16"><path d="M1391.6,1061.6H1399.4V1069.2H1397L1395.5,1072.3L1394,1069.2H1391.6Z" fill="#000" stroke="#f5861f" stroke-width="1.2"/></svg>
<span class="t" style="left:1392.95px;top:1062px;font-size:7.5px;color:#ffffff;font-weight:bold;">T</span>
<div class="badge" style="left:1486px;top:1002px;width:158px;height:74px;"><div class="hd" style="height:19px;background:#58595b;border-bottom:1px solid #a6a6a6;"></div></div>
<span class="t" style="left:1491.77px;top:1004px;font-size:14.5px;color:#f2f2f2;transform:scaleX(0.9707);">Trigger</span>
<div style="left:1490px;top:1023px;width:30px;height:16px;border-radius:6.5px;background:#8fd02e;border:1px solid #141414;"></div>
<span class="t" style="left:1500.71px;top:1024px;font-size:13.5px;color:#101010;">4</span>
<svg style="left:1528px;top:1022px" width="22" height="16" viewBox="1528 1022 22 16"><path d="M1530.2,1035.2H1534.3L1541.6,1025.6H1546" fill="none" stroke="#2b2b80" stroke-width="1.1"/></svg>
<span class="t" style="left:1556.70px;top:1023px;font-size:14.5px;color:#161616;transform:scaleX(0.8621);">2 V</span>
<div class="badge" style="left:1651px;top:1002px;width:148px;height:74px;"><div class="hd" style="height:19px;background:#58595b;border-bottom:1px solid #a6a6a6;"></div></div>
<span class="t" style="left:1656.70px;top:1004px;font-size:14.5px;color:#f2f2f2;transform:scaleX(0.9699);">Acquisition</span>
<span class="t" style="left:1655.30px;top:1023px;font-size:14.5px;color:#161616;transform:scaleX(0.8986);">Auto,</span>
<span class="t" style="left:1736.40px;top:1023px;font-size:14.5px;color:#161616;transform:scaleX(0.8577);">Analyze</span>
<span class="t" style="left:1655.30px;top:1042px;font-size:14.5px;color:#161616;transform:scaleX(0.8723);">High Res: 12 bits</span>
<span class="t" style="left:1655.30px;top:1060px;font-size:14.5px;color:#161616;transform:scaleX(0.8857);">5 Acqs</span>
<div style="left:1822px;top:999px;width:90px;height:36px;background:#f2f008;border:1px solid #77773c;border-radius:7px;"></div>
<span class="t" style="left:1846.70px;top:1010px;font-size:12.5px;color:#0a0a0a;transform:scaleX(0.9261);font-weight:bold;">Ready</span>
<div style="left:1823px;top:1041px;width:89px;height:35px;background:#cacaca;border-radius:5px;"></div>
<span class="t" style="left:1826.20px;top:1042px;font-size:14.5px;color:#161616;transform:scaleX(0.9032);">25 Apr 2023</span>
<span class="t" style="left:1829.80px;top:1059px;font-size:14.5px;color:#161616;transform:scaleX(0.9073);">3:32:13 PM</span>
</div>
</body></html>
